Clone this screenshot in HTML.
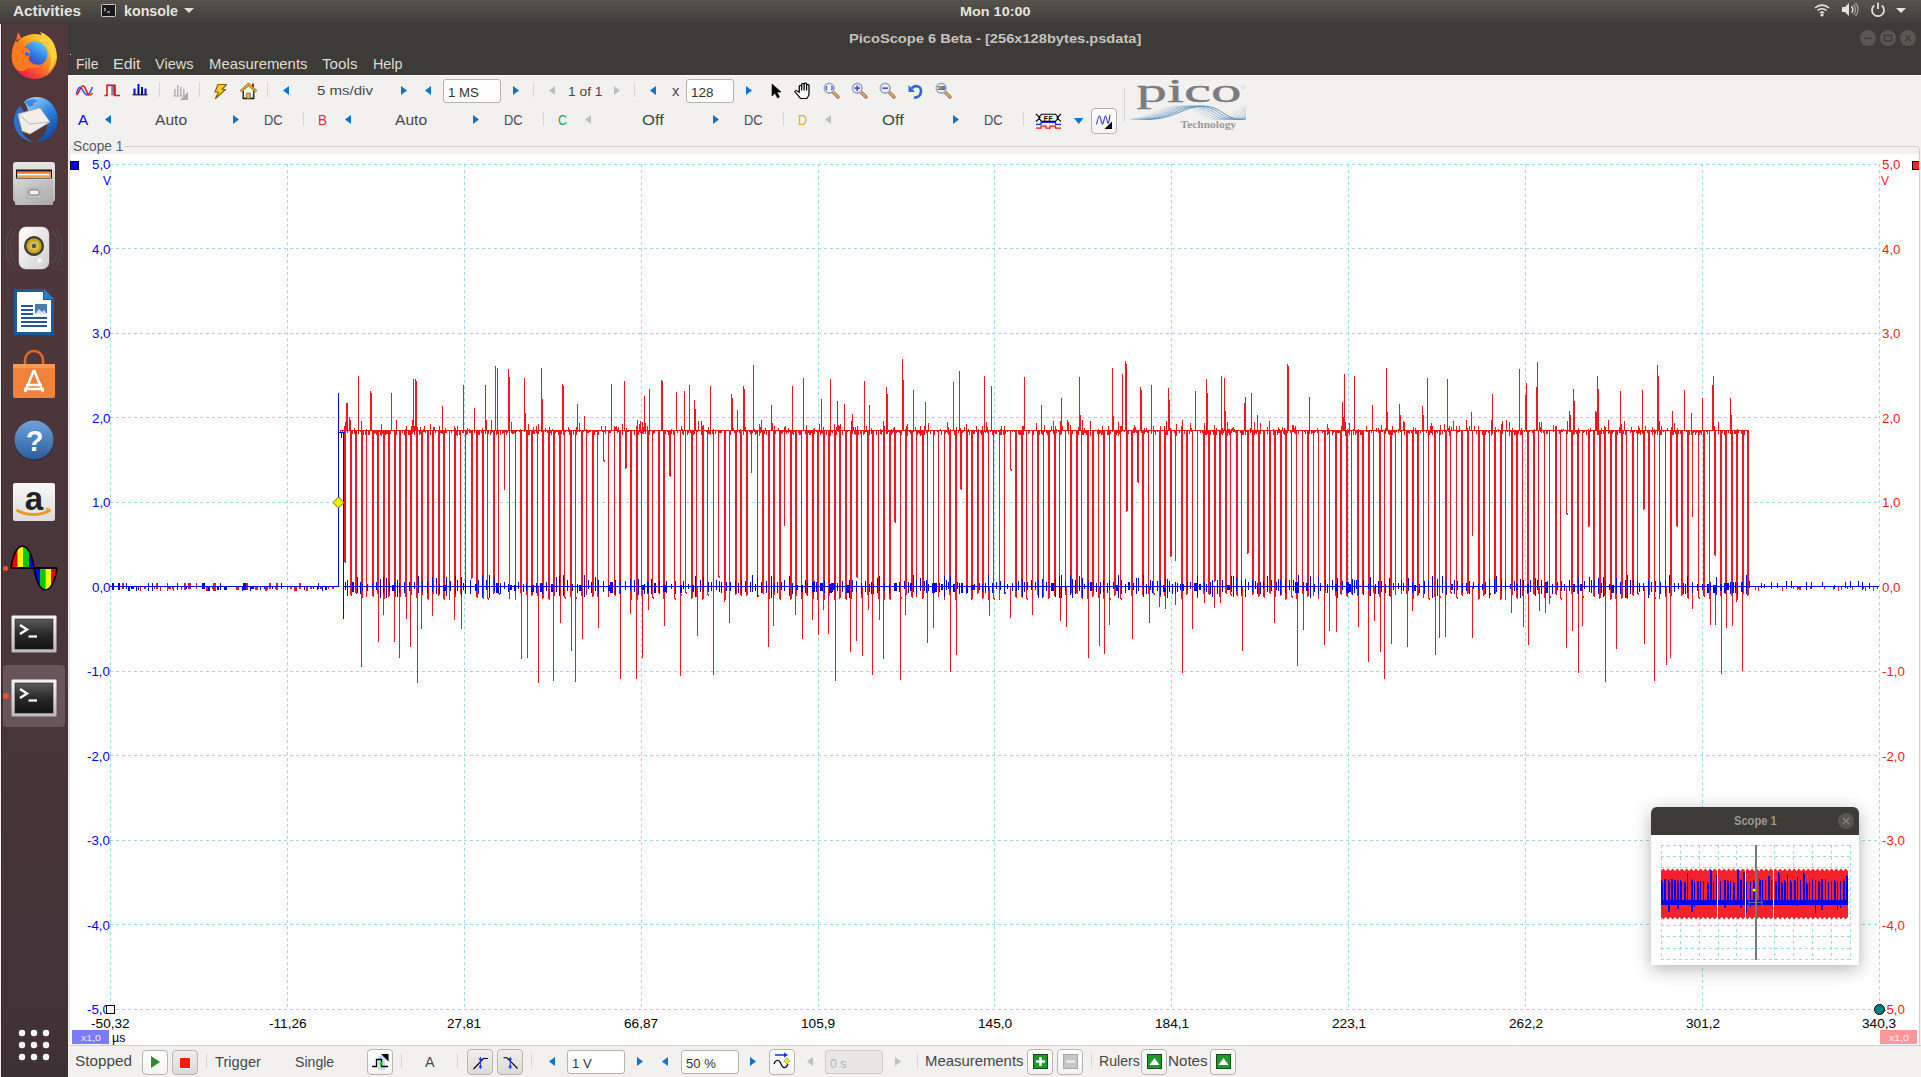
<!DOCTYPE html><html><head><meta charset="utf-8"><title>PicoScope</title><style>
*{margin:0;padding:0;box-sizing:border-box}
html,body{width:1921px;height:1077px;overflow:hidden;background:#3c3b37;font-family:"Liberation Sans",sans-serif}
.a{position:absolute}
.t{position:absolute;white-space:nowrap;transform-origin:0 0}
svg{position:absolute;overflow:visible}
</style></head><body>
<div class="a" style="left:0;top:0;width:1921px;height:24px;background:linear-gradient(#57534c,#3f3d39)"></div>
<div class="t" style="left:13.00px;top:2.97px;font-size:14.40px;line-height:16.09px;color:#e6e3dc;font-weight:bold;transform:scaleX(1.0621);">Activities</div>
<div class="t" style="left:124.00px;top:2.97px;font-size:14.40px;line-height:16.09px;color:#e6e3dc;font-weight:bold;transform:scaleX(0.9918);">konsole</div>
<div class="t" style="left:959.50px;top:3.63px;font-size:13.44px;line-height:15.02px;color:#e6e3dc;font-weight:bold;transform:scaleX(1.0725);">Mon 10:00</div>
<svg class="a" style="left:101px;top:4px;" width="15" height="13" viewBox="0 0 15 13"><rect x="0.5" y="0.5" width="14" height="12" rx="1" fill="#1a1a1a" stroke="#c8c8c8"/><path d="M3 4l2 1.5-2 1.5M6 8h3" stroke="#eee" stroke-width="1" fill="none"/></svg><svg class="a" style="left:184px;top:8px;" width="11" height="6" viewBox="0 0 11 6"><path d="M0 0h10l-5 5z" fill="#e0ddd6"/></svg><svg class="a" style="left:1814px;top:2px;" width="16" height="15" viewBox="0 0 16 15"><path d="M1 6a10 10 0 0 1 14 0M3.5 8.5a6.5 6.5 0 0 1 9 0M6 11a3 3 0 0 1 4 0" stroke="#e6e3dc" stroke-width="1.6" fill="none"/><circle cx="8" cy="13" r="1.6" fill="#e6e3dc"/></svg><svg class="a" style="left:1841px;top:2px;" width="17" height="15" viewBox="0 0 17 15"><path d="M1 5h3l4-4v13l-4-4H1z" fill="#e6e3dc"/><path d="M10.5 4.5a4 4 0 0 1 0 6M12.5 2.5a7 7 0 0 1 0 10M14.5 1a9.5 9.5 0 0 1 0 13" stroke="#a9a59d" stroke-width="1.2" fill="none"/><path d="M10.5 4.5a4 4 0 0 1 0 6" stroke="#e6e3dc" stroke-width="1.3" fill="none"/></svg><svg class="a" style="left:1870px;top:1px;" width="16" height="16" viewBox="0 0 16 16"><path d="M4.2 4.5a6 6 0 1 0 7.6 0" stroke="#e6e3dc" stroke-width="1.7" fill="none"/><path d="M8 1.5v6.5" stroke="#e6e3dc" stroke-width="1.7"/></svg><svg class="a" style="left:1896px;top:8px;" width="10" height="6" viewBox="0 0 10 6"><path d="M0 0h10l-5 5z" fill="#e6e3dc"/></svg>
<div class="a" style="left:68px;top:24px;width:1853px;height:51px;background:#3c3b37"></div>
<div class="t" style="left:848.50px;top:30.63px;font-size:13.44px;line-height:15.02px;color:#c6c2ba;font-weight:bold;transform:scaleX(1.0904);">PicoScope 6 Beta - [256x128bytes.psdata]</div>
<svg class="a" style="left:1860px;top:30px;" width="16" height="16" viewBox="0 0 16 16"><circle cx="8" cy="8" r="8" fill="#595751"/><path d="M4 8.3h8" stroke="#3a3934" stroke-width="1.2"/></svg><svg class="a" style="left:1880px;top:30px;" width="16" height="16" viewBox="0 0 16 16"><circle cx="8" cy="8" r="8" fill="#595751"/><rect x="4.3" y="5.4" width="7.4" height="5.4" fill="none" stroke="#3a3934" stroke-width="1.2"/></svg><svg class="a" style="left:1900px;top:30px;" width="16" height="16" viewBox="0 0 16 16"><circle cx="8" cy="8" r="8" fill="#595751"/><path d="M5.2 5.2l5.6 5.6M10.8 5.2l-5.6 5.6" stroke="#3a3934" stroke-width="1.1"/></svg><div class="a" style="left:70px;top:54px;width:1px;height:1px;background:#eee"></div>
<div class="t" style="left:75.60px;top:56.59px;font-size:13.72px;line-height:15.32px;color:#dfdbd2;transform:scaleX(1.0143);">File</div>
<div class="t" style="left:112.50px;top:56.59px;font-size:13.72px;line-height:15.32px;color:#dfdbd2;transform:scaleX(1.1622);">Edit</div>
<div class="t" style="left:154.50px;top:56.59px;font-size:13.72px;line-height:15.32px;color:#dfdbd2;transform:scaleX(1.0591);">Views</div>
<div class="t" style="left:208.50px;top:56.59px;font-size:13.72px;line-height:15.32px;color:#dfdbd2;transform:scaleX(1.0855);">Measurements</div>
<div class="t" style="left:322.00px;top:56.59px;font-size:13.72px;line-height:15.32px;color:#dfdbd2;transform:scaleX(1.1083);">Tools</div>
<div class="t" style="left:372.50px;top:56.59px;font-size:13.72px;line-height:15.32px;color:#dfdbd2;transform:scaleX(1.0465);">Help</div>
<div class="a" style="left:68px;top:75px;width:1853px;height:1002px;background:#f2f1f0;border-top:1px solid #fff"></div>
<svg class="a" style="left:76px;top:85px;" width="17" height="11" viewBox="0 0 17 11"><path d="M0.5 9C2 2 4 1 6 4s3 6 5 6 4-4 5.5-8" stroke="#3057ff" stroke-width="1.6" fill="none"/><path d="M0.5 10C3 9 4 1 7 1s4 9 6 9 3-1 3.5-2" stroke="#f01010" stroke-width="1.6" fill="none"/></svg><svg class="a" style="left:104px;top:84px;" width="17" height="13" viewBox="0 0 17 13"><defs><linearGradient id="pg" x1="0" y1="0" x2="1" y2="0"><stop offset="0" stop-color="#4ec8ff"/><stop offset="1" stop-color="#b02030"/></linearGradient></defs><rect x="7" y="2" width="4" height="9.5" fill="url(#pg)"/><path d="M0.5 11.5H3V1.2H11v10.3h5" stroke="#ff0000" stroke-width="1.5" fill="none"/></svg><svg class="a" style="left:132px;top:83px;" width="17" height="14" viewBox="0 0 17 14"><defs><linearGradient id="bg2" x1="0" y1="0" x2="0" y2="1"><stop offset="0" stop-color="#0010ff"/><stop offset="1" stop-color="#000080"/></linearGradient></defs><path d="M0.5 11.8h15" stroke="#000" stroke-width="1.1"/><rect x="1.5" y="5.5" width="2" height="6" fill="url(#bg2)"/><rect x="5.5" y="1" width="2" height="10.5" fill="url(#bg2)"/><rect x="9" y="4" width="2" height="7.5" fill="url(#bg2)"/><rect x="12.5" y="5.5" width="2" height="6" fill="url(#bg2)"/></svg><div class="a" style="left:159px;top:82px;width:1px;height:15px;background:#d8d6d3"></div><svg class="a" style="left:172px;top:84px;" width="17" height="16" viewBox="0 0 17 16"><path d="M1 12h11" stroke="#bbb" stroke-width="1.2"/><rect x="2" y="5" width="1.6" height="7" fill="#b5b5b5"/><rect x="5" y="1" width="1.6" height="11" fill="#b5b5b5"/><rect x="8" y="3" width="1.6" height="9" fill="#b5b5b5"/><rect x="11" y="5" width="1.6" height="7" fill="#b5b5b5"/><path d="M16 8v8H8z" fill="#aaa"/></svg><div class="a" style="left:199px;top:82px;width:1px;height:15px;background:#d8d6d3"></div><svg class="a" style="left:212px;top:83px;" width="16" height="17" viewBox="0 0 16 17"><path d="M6 1.5h8.5L10 6.5h3.5L3.5 15.5 6.5 9H3z" fill="#f8d030" stroke="#8a6000" stroke-width="1.2" stroke-linejoin="round"/></svg><svg class="a" style="left:240px;top:83px;" width="17" height="17" viewBox="0 0 17 17"><defs><linearGradient id="hw" x1="0" y1="0" x2="0" y2="1"><stop offset="0" stop-color="#ffffff"/><stop offset="1" stop-color="#b8e0e8"/></linearGradient></defs><rect x="12" y="0.5" width="1.8" height="4" fill="#a00"/><path d="M3.2 8v7.5h10.6V8" fill="url(#hw)" stroke="#1a1a1a" stroke-width="1.3"/><path d="M0.8 8.5L8.5 1.2 16.2 8.5" stroke="#7a5a00" stroke-width="2.6" fill="none"/><path d="M0.8 8.5L8.5 1.2 16.2 8.5" stroke="#f0c030" stroke-width="1.3" fill="none"/><rect x="6.8" y="10" width="3.4" height="5.5" fill="#e8b820" stroke="#6a5000" stroke-width="0.6"/></svg><div class="a" style="left:267px;top:82px;width:1px;height:15px;background:#d8d6d3"></div><svg class="a" style="left:283px;top:86px;" width="6" height="9" viewBox="0 0 6 9"><path d="M6 0V9L0 4.5z" fill="#1173c9"/></svg><div class="t" style="left:317.00px;top:83.81px;font-size:13.03px;line-height:14.56px;color:#474747;transform:scaleX(1.1536);">5 ms/div</div><svg class="a" style="left:401px;top:86px;" width="6" height="9" viewBox="0 0 6 9"><path d="M0 0V9L6 4.5z" fill="#1173c9"/></svg><svg class="a" style="left:425px;top:86px;" width="6" height="9" viewBox="0 0 6 9"><path d="M6 0V9L0 4.5z" fill="#1173c9"/></svg><div class="a" style="left:443px;top:79px;width:58px;height:24px;background:#fff;border:1px solid #b5b3ae;border-radius:3px"></div><div class="t" style="left:448.00px;top:84.73px;font-size:13.44px;line-height:15.02px;color:#303030;transform:scaleX(0.9796);">1 MS</div><svg class="a" style="left:512.5px;top:86px;" width="6" height="9" viewBox="0 0 6 9"><path d="M0 0V9L6 4.5z" fill="#1173c9"/></svg><div class="a" style="left:533px;top:82px;width:1px;height:15px;background:#d8d6d3"></div><svg class="a" style="left:549px;top:86px;" width="6" height="9" viewBox="0 0 6 9"><path d="M6 0V9L0 4.5z" fill="#bcc0c0"/></svg><div class="t" style="left:567.50px;top:83.83px;font-size:13.44px;line-height:15.02px;color:#474747;transform:scaleX(1.0266);">1 of 1</div><svg class="a" style="left:614px;top:86px;" width="6" height="9" viewBox="0 0 6 9"><path d="M0 0V9L6 4.5z" fill="#bcc0c0"/></svg><div class="a" style="left:634px;top:82px;width:1px;height:15px;background:#d8d6d3"></div><svg class="a" style="left:650px;top:86px;" width="6" height="9" viewBox="0 0 6 9"><path d="M6 0V9L0 4.5z" fill="#1173c9"/></svg><div class="t" style="left:672.00px;top:82.84px;font-size:14.54px;line-height:16.24px;color:#474747;transform:scaleX(1.0178);">x</div><div class="a" style="left:686px;top:79px;width:48px;height:24px;background:#fff;border:1px solid #b5b3ae;border-radius:3px"></div><div class="t" style="left:691.00px;top:84.73px;font-size:13.44px;line-height:15.02px;color:#303030;">128</div><svg class="a" style="left:745.6px;top:86px;" width="6" height="9" viewBox="0 0 6 9"><path d="M0 0V9L6 4.5z" fill="#1173c9"/></svg><svg class="a" style="left:771px;top:83px;" width="10" height="16" viewBox="0 0 10 16"><path d="M1 1v12l3-3 2.5 5 2-1-2.5-5H10z" fill="#000" stroke="#000" stroke-width="0.6"/></svg><svg class="a" style="left:794px;top:82px;" width="19" height="18" viewBox="0 0 19 18"><path transform="translate(-0.5,0) scale(1.28,1)" d="M5.5 16.5L3 12.5 1.2 10c-.6-.9.6-2 1.5-1.2L4.5 10.5V4.5c0-1.3 1.9-1.3 1.9 0V8V2.5c0-1.3 1.9-1.3 1.9 0V8V2c0-1.3 1.9-1.3 1.9 0v6V3.5c0-1.3 1.9-1.3 1.9 0V12c0 2-1 3.5-1.8 4.5z" fill="#fff" stroke="#000" stroke-width="1" stroke-linejoin="round"/></svg><svg class="a" style="left:823px;top:82px;" width="18" height="18" viewBox="0 0 18 18"><defs><linearGradient id="mh" x1="0" y1="0" x2="1" y2="1"><stop offset="0" stop-color="#f0a050"/><stop offset="1" stop-color="#8a7060"/></linearGradient></defs><path d="M9.8 9.8l5.2 5.2" stroke="#7a6a60" stroke-width="3.2" stroke-linecap="round"/><path d="M9.8 9.8l5 5" stroke="#f0a050" stroke-width="2" stroke-linecap="round"/><circle cx="6.2" cy="6.2" r="4.8" fill="#e6f4ff" stroke="#9aaacb" stroke-width="1.8"/><path d="M4 4.2a3 3 0 0 0 0 4M8.4 4.2a3 3 0 0 1 0 4" stroke="#7050b0" stroke-width="1.2" fill="none"/></svg><svg class="a" style="left:851px;top:82px;" width="18" height="18" viewBox="0 0 18 18"><defs><linearGradient id="mh" x1="0" y1="0" x2="1" y2="1"><stop offset="0" stop-color="#f0a050"/><stop offset="1" stop-color="#8a7060"/></linearGradient></defs><path d="M9.8 9.8l5.2 5.2" stroke="#7a6a60" stroke-width="3.2" stroke-linecap="round"/><path d="M9.8 9.8l5 5" stroke="#f0a050" stroke-width="2" stroke-linecap="round"/><circle cx="6.2" cy="6.2" r="4.8" fill="#e6f4ff" stroke="#9aaacb" stroke-width="1.8"/><path d="M3.5 6.2h5.4M6.2 3.5v5.4" stroke="#7040a0" stroke-width="1.7"/></svg><svg class="a" style="left:879px;top:82px;" width="18" height="18" viewBox="0 0 18 18"><defs><linearGradient id="mh" x1="0" y1="0" x2="1" y2="1"><stop offset="0" stop-color="#f0a050"/><stop offset="1" stop-color="#8a7060"/></linearGradient></defs><path d="M9.8 9.8l5.2 5.2" stroke="#7a6a60" stroke-width="3.2" stroke-linecap="round"/><path d="M9.8 9.8l5 5" stroke="#f0a050" stroke-width="2" stroke-linecap="round"/><circle cx="6.2" cy="6.2" r="4.8" fill="#e6f4ff" stroke="#9aaacb" stroke-width="1.8"/><path d="M3.5 6.2h5.4" stroke="#7040a0" stroke-width="1.7"/></svg><svg class="a" style="left:908px;top:83px;" width="15" height="16" viewBox="0 0 15 16"><path d="M4 5.5C6 2 13 2 13 8s-5 7-7 6" stroke="#2d6bd8" stroke-width="2.6" fill="none"/><path d="M0.5 2v7h6.5z" fill="#2d6bd8"/></svg><svg class="a" style="left:935px;top:82px;" width="18" height="18" viewBox="0 0 18 18"><defs><linearGradient id="mh" x1="0" y1="0" x2="1" y2="1"><stop offset="0" stop-color="#f0a050"/><stop offset="1" stop-color="#8a7060"/></linearGradient></defs><path d="M9.8 9.8l5.2 5.2" stroke="#7a6a60" stroke-width="3.2" stroke-linecap="round"/><path d="M9.8 9.8l5 5" stroke="#f0a050" stroke-width="2" stroke-linecap="round"/><circle cx="6.2" cy="6.2" r="4.8" fill="#e6f4ff" stroke="#9aaacb" stroke-width="1.8"/><text x="6.4" y="8.2" font-size="5.6" font-family="Liberation Sans" font-weight="bold" text-anchor="middle" fill="#000" textLength="7.4" lengthAdjust="spacingAndGlyphs">100</text></svg><div class="a" style="left:1124px;top:88px;width:1px;height:34px;background:#d8d6d3"></div><svg class="a" style="left:1130px;top:78px;" width="120" height="56" viewBox="0 0 120 56"><defs><clipPath id="wc"><rect x="1" y="20" width="115" height="30"/></clipPath></defs><text x="6.5" y="24" font-family="Liberation Serif" font-size="33" fill="#7c7c80" stroke="#7c7c80" stroke-width="0.35" textLength="105" lengthAdjust="spacingAndGlyphs">pico</text><circle cx="113" cy="9" r="1.6" fill="none" stroke="#bbb" stroke-width="0.5"/><g clip-path="url(#wc)"><path d="M-8.0 41.5C18.0 41.5 30.0 28 48.0 28S70.0 41.5 86.0 41.5S104.0 28 122.0 28" stroke="#d2e2ee" stroke-width="0.85" fill="none"/><path d="M-3.8 41.5C22.2 41.5 34.2 28 52.2 28S74.2 41.5 90.2 41.5S108.2 28 126.2 28" stroke="#bcd3e5" stroke-width="0.85" fill="none"/><path d="M0.40000000000000036 41.5C26.4 41.5 38.4 28 56.4 28S78.4 41.5 94.4 41.5S112.4 28 130.4 28" stroke="#a6c4dc" stroke-width="0.85" fill="none"/><path d="M4.600000000000001 41.5C30.6 41.5 42.6 28 60.6 28S82.6 41.5 98.6 41.5S116.6 28 134.6 28" stroke="#90b5d3" stroke-width="0.85" fill="none"/><path d="M8.8 41.5C34.8 41.5 46.8 28 64.8 28S86.8 41.5 102.8 41.5S120.8 28 138.8 28" stroke="#7aa6ca" stroke-width="0.85" fill="none"/><path d="M13.0 41.5C39.0 41.5 51.0 28 69.0 28S91.0 41.5 107.0 41.5S125.0 28 143.0 28" stroke="#6497c1" stroke-width="0.85" fill="none"/><path d="M17.200000000000003 41.5C43.2 41.5 55.2 28 73.2 28S95.2 41.5 111.2 41.5S129.2 28 147.2 28" stroke="#4e88b8" stroke-width="0.85" fill="none"/></g><text x="50.5" y="50.4" font-family="Liberation Serif" font-size="10.5" font-weight="bold" fill="#9a9a9a" textLength="55.6" lengthAdjust="spacingAndGlyphs">Technology</text></svg><div class="t" style="left:77.80px;top:113.29px;font-size:13.72px;line-height:15.32px;color:#0000ff;transform:scaleX(1.1098);">A</div><svg class="a" style="left:104.5px;top:115px;" width="6" height="9" viewBox="0 0 6 9"><path d="M6 0V9L0 4.5z" fill="#1173c9"/></svg><div class="t" style="left:155.00px;top:113.29px;font-size:13.72px;line-height:15.32px;color:#474747;transform:scaleX(1.1352);">Auto</div><svg class="a" style="left:232.5px;top:115px;" width="6" height="9" viewBox="0 0 6 9"><path d="M0 0V9L6 4.5z" fill="#1173c9"/></svg><div class="t" style="left:263.50px;top:113.29px;font-size:13.72px;line-height:15.32px;color:#474747;transform:scaleX(0.9333);">DC</div><div class="a" style="left:303px;top:112px;width:1px;height:14px;background:#d8d6d3"></div><div class="t" style="left:318.00px;top:113.29px;font-size:13.72px;line-height:15.32px;color:#ff2a3a;transform:scaleX(0.9866);">B</div><svg class="a" style="left:344.5px;top:115px;" width="6" height="9" viewBox="0 0 6 9"><path d="M6 0V9L0 4.5z" fill="#1173c9"/></svg><div class="t" style="left:395.00px;top:113.29px;font-size:13.72px;line-height:15.32px;color:#474747;transform:scaleX(1.1352);">Auto</div><svg class="a" style="left:472.5px;top:115px;" width="6" height="9" viewBox="0 0 6 9"><path d="M0 0V9L6 4.5z" fill="#1173c9"/></svg><div class="t" style="left:503.50px;top:113.29px;font-size:13.72px;line-height:15.32px;color:#474747;transform:scaleX(0.9333);">DC</div><div class="a" style="left:543px;top:112px;width:1px;height:14px;background:#d8d6d3"></div><div class="t" style="left:558.00px;top:113.29px;font-size:13.72px;line-height:15.32px;color:#1aaa50;transform:scaleX(0.9112);">C</div><svg class="a" style="left:584.5px;top:115px;" width="6" height="9" viewBox="0 0 6 9"><path d="M6 0V9L0 4.5z" fill="#bcc0c0"/></svg><div class="t" style="left:641.50px;top:113.29px;font-size:13.72px;line-height:15.32px;color:#474747;transform:scaleX(1.2150);">Off</div><svg class="a" style="left:712.5px;top:115px;" width="6" height="9" viewBox="0 0 6 9"><path d="M0 0V9L6 4.5z" fill="#1173c9"/></svg><div class="t" style="left:743.50px;top:113.29px;font-size:13.72px;line-height:15.32px;color:#474747;transform:scaleX(0.9333);">DC</div><div class="a" style="left:783px;top:112px;width:1px;height:14px;background:#d8d6d3"></div><div class="t" style="left:798.00px;top:113.29px;font-size:13.72px;line-height:15.32px;color:#e2a81c;transform:scaleX(0.9112);">D</div><svg class="a" style="left:824.5px;top:115px;" width="6" height="9" viewBox="0 0 6 9"><path d="M6 0V9L0 4.5z" fill="#bcc0c0"/></svg><div class="t" style="left:881.50px;top:113.29px;font-size:13.72px;line-height:15.32px;color:#474747;transform:scaleX(1.2150);">Off</div><svg class="a" style="left:952.5px;top:115px;" width="6" height="9" viewBox="0 0 6 9"><path d="M0 0V9L6 4.5z" fill="#1173c9"/></svg><div class="t" style="left:983.50px;top:113.29px;font-size:13.72px;line-height:15.32px;color:#474747;transform:scaleX(0.9333);">DC</div><div class="a" style="left:1023px;top:112px;width:1px;height:14px;background:#d8d6d3"></div><svg class="a" style="left:1035px;top:113px;" width="27" height="17" viewBox="0 0 27 17"><path d="M1 1l4 3.8L1 8.5M26 1l-4 3.8 4 3.8M3.5 4.8L6.5 1.2h14l3 3.6-3 3.6h-14z" stroke="#000" stroke-width="1.1" fill="none"/><text x="13.5" y="8" font-size="6.6" font-weight="bold" font-family="Liberation Sans" text-anchor="middle" fill="#000" letter-spacing="0.8">FF</text><path d="M1 11.3h5V9.5h14.5v1.8h5.5" stroke="#1030ff" stroke-width="1.2" fill="none"/><path d="M1 15.2h5v-2h5v2h4v-2h5.5v2h5.5" stroke="#ff1010" stroke-width="1.2" fill="none"/></svg><svg class="a" style="left:1074px;top:118px;" width="10" height="6" viewBox="0 0 10 6"><path d="M0 0h9.5L4.75 6z" fill="#1173c9"/></svg><div class="a" style="left:1091px;top:108px;width:26px;height:26px;background:linear-gradient(#ffffff,#f4f3f2);border:1px solid #b9b6b1;border-radius:4px"></div><svg class="a" style="left:1094px;top:111px;" width="20" height="20" viewBox="0 0 20 20"><path d="M2.5 13.5C3.5 9 4.5 5 5.5 5S7.5 13 8.5 13 10.5 5 11.5 5 13 11 14 12 15.5 6 16 4" stroke="#3a3ac8" stroke-width="1.1" fill="none"/><path d="M18 10.5v7.5H10.5z" fill="#000"/></svg>
<div class="a" style="left:0;top:24px;width:68px;height:1053px;background:linear-gradient(#51383b,#48363a 55%,#3f3236)"></div>
<div class="a" style="left:0;top:24px;width:1px;height:1053px;background:#f4f2ee"></div><div class="a" style="left:1px;top:24px;width:1px;height:1053px;background:#40292d"></div><svg class="a" style="left:10px;top:30px;" width="48" height="50" viewBox="0 0 48 50"><defs><linearGradient id="ffo" x1="0.9" y1="0.1" x2="0.2" y2="0.9"><stop offset="0" stop-color="#ffe44a"/><stop offset="0.35" stop-color="#ffa51f"/><stop offset="0.7" stop-color="#ff5a2a"/><stop offset="1" stop-color="#e8204f"/></linearGradient><linearGradient id="ffb" x1="0.8" y1="0" x2="0.2" y2="1"><stop offset="0" stop-color="#5fd0ff"/><stop offset="0.5" stop-color="#2f7de8"/><stop offset="1" stop-color="#4a2bb0"/></linearGradient></defs><circle cx="24.5" cy="26.5" r="22.5" fill="url(#ffo)"/><circle cx="25" cy="24" r="12.5" fill="url(#ffb)"/><path d="M6 10C8 14 9 16 13 17c4 1 6 2 7 4-3 0-5 1-5 3s3 2 5 1c-2 3-1 6 2 8s7 2 10 1c-3 3-8 5-14 4C10 46 3 38 2 30 1 22 3 15 6 10z" fill="#ff7a1f"/><path d="M16 21c3-1 5 1 4 3" fill="#ff9a1f"/><path d="M30 2c9 3 15 10 16 19s-3 17-8 21c3-6 4-12 2-18S34 12 30 10c2-3 2-5 0-8z" fill="#ffd23a"/><path d="M6 10l2-8 4 7z" fill="#ff6a2a"/></svg><svg class="a" style="left:10px;top:94px;" width="48" height="50" viewBox="0 0 48 50"><defs><linearGradient id="tbg" x1="0.2" y1="0" x2="0.8" y2="1"><stop offset="0" stop-color="#9ed4ff"/><stop offset="0.45" stop-color="#2f86e0"/><stop offset="1" stop-color="#0e3f9a"/></linearGradient></defs><path d="M14 8C20 2 32 1 40 8s10 20 5 29c-4 7-11 11-20 11 6-3 11-8 12-14s-2-12-8-14c-4-1-8 0-11 2 0-5 0-9-4-14z" fill="url(#tbg)"/><path d="M10 12C4 18 2 28 6 36s10 11 18 12c-6-2-12-7-14-14 0-8 4-12 6-14-2-2-4-5-6-8z" fill="#2a73d0"/><path d="M8 20l22-6 10 14-20 12-8-3z" fill="#f1eee6" stroke="#b8b4ab" stroke-width="0.7"/><path d="M8 20l12 10 20-2" stroke="#a8a49b" stroke-width="0.7" fill="none"/><path d="M14 8c4-3 10-4 14-1-3 1-6 3-8 6z" fill="#3a8ae6"/><circle cx="22" cy="11" r="0.9" fill="#e04020"/></svg><svg class="a" style="left:12px;top:161px;" width="44" height="46" viewBox="0 0 44 46"><defs><linearGradient id="fl" x1="0" y1="0" x2="0" y2="1"><stop offset="0" stop-color="#e6e6e6"/><stop offset="1" stop-color="#b5b5b5"/></linearGradient><linearGradient id="fd" x1="0" y1="0" x2="1" y2="1"><stop offset="0" stop-color="#d4d4d4"/><stop offset="1" stop-color="#a9a9a9"/></linearGradient></defs><rect x="1" y="1" width="42" height="40" rx="3" fill="url(#fl)"/><rect x="4" y="8.5" width="36" height="9" fill="#1a1410"/><rect x="5" y="11" width="34" height="6" fill="#f0a24a"/><rect x="6" y="13" width="31" height="1.3" fill="#fff"/><rect x="5" y="10" width="34" height="1.5" fill="#d2501a"/><rect x="3" y="19" width="38" height="25" rx="1" fill="url(#fd)"/><rect x="15" y="27" width="14" height="10" rx="2" fill="#c8c8c8" stroke="#9a9a9a" stroke-width="0.6"/><rect x="17" y="29" width="10" height="5" rx="1" fill="#f2f2f2" stroke="#555" stroke-width="0.8"/></svg><svg class="a" style="left:8px;top:222px;" width="52" height="50" viewBox="0 0 52 50"><defs><radialGradient id="sy" cx="0.5" cy="0.5" r="0.5"><stop offset="0" stop-color="#f5e07a"/><stop offset="1" stop-color="#b8920c"/></radialGradient><linearGradient id="sb" x1="0" y1="0" x2="1" y2="1"><stop offset="0" stop-color="#ffffff"/><stop offset="1" stop-color="#cfcfcf"/></linearGradient></defs><path d="M8 8C0 18 0 32 8 42M4 6C-4 18 -4 32 4 44M44 8c8 10 8 24 0 34M48 6c8 12 8 26 0 38" stroke="#5a6a90" stroke-width="1.1" fill="none" opacity="0.35"/><rect x="11" y="5" width="30" height="42" rx="7" fill="url(#sb)" stroke="#d8d8d8" stroke-width="0.5"/><circle cx="26" cy="24" r="10" fill="#3a3a3a"/><circle cx="26" cy="24" r="7.8" fill="url(#sy)"/><circle cx="26" cy="24" r="2.3" fill="#555"/><circle cx="31.5" cy="38.5" r="3.2" fill="#f4f4f4" stroke="#c4c4c4" stroke-width="0.6"/></svg><svg class="a" style="left:13px;top:288px;" width="42" height="48" viewBox="0 0 42 48"><path d="M1 1h30l10 10v36H1z" fill="#1f5a94"/><path d="M4 4h26v8h8v32H4z" fill="#fff"/><path d="M31 1l10 10h-10z" fill="#2f7ac2"/><path d="M8 18h12M8 22h12M8 26h12M8 30h26M8 34h26M8 38h26" stroke="#1f5a94" stroke-width="2"/><rect x="22" y="16" width="12" height="10" fill="#4a7ab0"/><path d="M22 26l4-5 3 3 2-2 3 4z" fill="#d0e0f0"/></svg><svg class="a" style="left:11px;top:352px;" width="46" height="48" viewBox="0 0 46 48"><path d="M14 12V8a9 9 0 0 1 18 0v4" stroke="#e06a2a" stroke-width="2.5" fill="none"/><rect x="2" y="12" width="42" height="34" rx="2" fill="#f0823a"/><rect x="2" y="12" width="42" height="4" fill="#f59a58"/><path d="M23 18l-9 22M23 18l9 22M15 33h16M13 37h20" stroke="#fff" stroke-width="2.5" fill="none"/></svg><svg class="a" style="left:11px;top:417px;" width="46" height="48" viewBox="0 0 46 48"><defs><linearGradient id="hg" x1="0" y1="0" x2="0" y2="1"><stop offset="0" stop-color="#6da3dc"/><stop offset="1" stop-color="#2b5d9c"/></linearGradient></defs><ellipse cx="23" cy="25" rx="20" ry="19" fill="#000" opacity="0.18"/><circle cx="23" cy="23" r="19.5" fill="url(#hg)"/><text x="23.5" y="34" text-anchor="middle" font-size="29" font-weight="bold" font-family="Liberation Sans" fill="#fff">?</text></svg><svg class="a" style="left:13px;top:483px;" width="42" height="38" viewBox="0 0 42 38"><defs><linearGradient id="ag" x1="0" y1="0" x2="0" y2="1"><stop offset="0" stop-color="#f8f8f8"/><stop offset="1" stop-color="#dcdcdc"/></linearGradient></defs><rect x="0" y="0" width="42" height="38" rx="2" fill="url(#ag)"/><text x="21" y="27" text-anchor="middle" font-size="33" font-weight="bold" font-family="Liberation Sans" fill="#222">a</text><path d="M3.5 27c9 6 25 6 34 0" stroke="#f39a1e" stroke-width="2.8" fill="none"/><path d="M33 24.5l5 2-3.5 4z" fill="#f39a1e"/></svg><svg class="a" style="left:8px;top:543px;" width="54" height="50" viewBox="0 0 54 50"><defs><clipPath id="ph1"><path d="M3 25C7 -4 22 -4 26 25z"/></clipPath><clipPath id="ph2"><path d="M26 25C30 54 45 54 49 25z"/></clipPath></defs><g clip-path="url(#ph1)"><rect x="0" y="0" width="9.5" height="26" fill="#e00"/><rect x="9.5" y="0" width="5.5" height="26" fill="#ff0"/><rect x="15" y="0" width="6" height="26" fill="#0c0"/><rect x="21" y="0" width="6" height="26" fill="#00e"/></g><g clip-path="url(#ph2)"><rect x="26" y="24" width="6" height="26" fill="#00e"/><rect x="32" y="24" width="5.5" height="26" fill="#0c0"/><rect x="37.5" y="24" width="5.5" height="26" fill="#ff0"/><rect x="43" y="24" width="7" height="26" fill="#e00"/></g><path d="M3 25C7 -4 22 -4 26 25S45 54 49 25" stroke="#000" stroke-width="1.6" fill="none"/><path d="M3 25h46" stroke="#000" stroke-width="1.8"/></svg><div class="a" style="left:3px;top:566px;width:5px;height:5px;border-radius:50%;background:#e9542a"></div><svg class="a" style="left:11px;top:615px;" width="46" height="38" viewBox="0 0 46 38"><defs><linearGradient id="tf1" x1="0" y1="0" x2="0" y2="1"><stop offset="0" stop-color="#f4f4f4"/><stop offset="1" stop-color="#b9b9b9"/></linearGradient><linearGradient id="ti1" x1="0" y1="0" x2="0" y2="1"><stop offset="0" stop-color="#5a5a5a"/><stop offset="0.5" stop-color="#2a2a2a"/><stop offset="1" stop-color="#111"/></linearGradient></defs><rect x="0.5" y="0.5" width="45" height="37" rx="1" fill="url(#tf1)"/><rect x="4" y="4" width="38" height="30" fill="url(#ti1)" stroke="#222" stroke-width="0.6"/><path d="M9 10l7 4.5-7 4.5" stroke="#fff" stroke-width="2.4" fill="none"/><path d="M17.5 21.5h8.5" stroke="#fff" stroke-width="2.2"/></svg><div class="a" style="left:3px;top:665px;width:62px;height:62px;border-radius:4px;background:#675559"></div><svg class="a" style="left:11px;top:679px;" width="46" height="38" viewBox="0 0 46 38"><defs><linearGradient id="tf2" x1="0" y1="0" x2="0" y2="1"><stop offset="0" stop-color="#f4f4f4"/><stop offset="1" stop-color="#b9b9b9"/></linearGradient><linearGradient id="ti2" x1="0" y1="0" x2="0" y2="1"><stop offset="0" stop-color="#5a5a5a"/><stop offset="0.5" stop-color="#2a2a2a"/><stop offset="1" stop-color="#111"/></linearGradient></defs><rect x="0.5" y="0.5" width="45" height="37" rx="1" fill="url(#tf2)"/><rect x="4" y="4" width="38" height="30" fill="url(#ti2)" stroke="#222" stroke-width="0.6"/><path d="M9 10l7 4.5-7 4.5" stroke="#fff" stroke-width="2.4" fill="none"/><path d="M17.5 21.5h8.5" stroke="#fff" stroke-width="2.2"/></svg><div class="a" style="left:3px;top:693px;width:6px;height:6px;border-radius:50%;background:#e9542a"></div><svg class="a" style="left:18px;top:1029px;" width="32" height="32" viewBox="0 0 32 32"><circle cx="4" cy="4" r="3.2" fill="#fff"/><circle cx="16" cy="4" r="3.2" fill="#fff"/><circle cx="28" cy="4" r="3.2" fill="#fff"/><circle cx="4" cy="16" r="3.2" fill="#fff"/><circle cx="16" cy="16" r="3.2" fill="#fff"/><circle cx="28" cy="16" r="3.2" fill="#fff"/><circle cx="4" cy="28" r="3.2" fill="#fff"/><circle cx="16" cy="28" r="3.2" fill="#fff"/><circle cx="28" cy="28" r="3.2" fill="#fff"/></svg>
<div class="a" style="left:69px;top:146px;width:1851px;height:900px;border:1px solid #d3d1ce;border-left-color:#e6e4e1;border-radius:4px 4px 0 0;background:#f2f1f0"></div>
<div class="a" style="left:70px;top:154px;width:1849px;height:891px;background:#fff"></div>
<div class="a" style="left:74px;top:139px;width:51px;height:12px;background:#f2f1f0"></div>
<div class="t" style="left:73.00px;top:139.49px;font-size:13.72px;line-height:15.32px;color:#5a5a5a;">Scope 1</div>
<svg class="a" style="left:0;top:0" width="1921" height="1077"><path d="M110.5 164V1010M287.5 164V1010M464.5 164V1010M641.5 164V1010M818.5 164V1010M994.5 164V1010M1171.5 164V1010M1348.5 164V1010M1525.5 164V1010M1702.5 164V1010M1879.5 164V1010M110 164.5H1880M110 248.5H1880M110 333.5H1880M110 417.5H1880M110 502.5H1880M110 586.5H1880M110 671.5H1880M110 755.5H1880M110 840.5H1880M110 924.5H1880M110 1009.5H1880" stroke="#a6d5e6" stroke-width="1" stroke-dasharray="3 3" fill="none"/></svg><div class="t" style="left:91.50px;top:159.13px;font-size:12.35px;line-height:13.79px;color:#0000ff;transform:scaleX(1.0781);">5,0</div><div class="t" style="left:1881.70px;top:159.13px;font-size:12.35px;line-height:13.79px;color:#ff1a1a;transform:scaleX(1.0781);">5,0</div><div class="t" style="left:91.50px;top:243.63px;font-size:12.35px;line-height:13.79px;color:#0000ff;transform:scaleX(1.0781);">4,0</div><div class="t" style="left:1881.70px;top:243.63px;font-size:12.35px;line-height:13.79px;color:#ff1a1a;transform:scaleX(1.0781);">4,0</div><div class="t" style="left:91.50px;top:328.13px;font-size:12.35px;line-height:13.79px;color:#0000ff;transform:scaleX(1.0781);">3,0</div><div class="t" style="left:1881.70px;top:328.13px;font-size:12.35px;line-height:13.79px;color:#ff1a1a;transform:scaleX(1.0781);">3,0</div><div class="t" style="left:91.50px;top:412.63px;font-size:12.35px;line-height:13.79px;color:#0000ff;transform:scaleX(1.0781);">2,0</div><div class="t" style="left:1881.70px;top:412.63px;font-size:12.35px;line-height:13.79px;color:#ff1a1a;transform:scaleX(1.0781);">2,0</div><div class="t" style="left:91.50px;top:497.13px;font-size:12.35px;line-height:13.79px;color:#0000ff;transform:scaleX(1.0781);">1,0</div><div class="t" style="left:1881.70px;top:497.13px;font-size:12.35px;line-height:13.79px;color:#ff1a1a;transform:scaleX(1.0781);">1,0</div><div class="t" style="left:91.50px;top:581.63px;font-size:12.35px;line-height:13.79px;color:#0000ff;transform:scaleX(1.0781);">0,0</div><div class="t" style="left:1881.70px;top:581.63px;font-size:12.35px;line-height:13.79px;color:#ff1a1a;transform:scaleX(1.0781);">0,0</div><div class="t" style="left:87.04px;top:666.13px;font-size:12.35px;line-height:13.79px;color:#0000ff;transform:scaleX(1.0781);">-1,0</div><div class="t" style="left:1881.70px;top:666.13px;font-size:12.35px;line-height:13.79px;color:#ff1a1a;transform:scaleX(1.0781);">-1,0</div><div class="t" style="left:87.04px;top:750.63px;font-size:12.35px;line-height:13.79px;color:#0000ff;transform:scaleX(1.0781);">-2,0</div><div class="t" style="left:1881.70px;top:750.63px;font-size:12.35px;line-height:13.79px;color:#ff1a1a;transform:scaleX(1.0781);">-2,0</div><div class="t" style="left:87.04px;top:835.13px;font-size:12.35px;line-height:13.79px;color:#0000ff;transform:scaleX(1.0781);">-3,0</div><div class="t" style="left:1881.70px;top:835.13px;font-size:12.35px;line-height:13.79px;color:#ff1a1a;transform:scaleX(1.0781);">-3,0</div><div class="t" style="left:87.04px;top:919.63px;font-size:12.35px;line-height:13.79px;color:#0000ff;transform:scaleX(1.0781);">-4,0</div><div class="t" style="left:1881.70px;top:919.63px;font-size:12.35px;line-height:13.79px;color:#ff1a1a;transform:scaleX(1.0781);">-4,0</div><div class="t" style="left:87.04px;top:1004.13px;font-size:12.35px;line-height:13.79px;color:#0000ff;transform:scaleX(1.0781);">-5,0</div><div class="t" style="left:1881.70px;top:1004.13px;font-size:12.35px;line-height:13.79px;color:#ff1a1a;transform:scaleX(1.0781);">-5,0</div><div class="t" style="left:103.00px;top:174.83px;font-size:12.35px;line-height:13.79px;color:#0000ff;transform:scaleX(0.9744);">V</div><div class="t" style="left:1881.00px;top:174.83px;font-size:12.35px;line-height:13.79px;color:#ff1a1a;transform:scaleX(0.9744);">V</div><div class="t" style="left:91.15px;top:1017.83px;font-size:12.35px;line-height:13.79px;color:#000;transform:scaleX(1.1057);">-50,32</div><div class="t" style="left:268.56px;top:1017.83px;font-size:12.35px;line-height:13.79px;color:#000;transform:scaleX(1.1057);">-11,26</div><div class="t" style="left:447.20px;top:1017.83px;font-size:12.35px;line-height:13.79px;color:#000;transform:scaleX(1.1057);">27,81</div><div class="t" style="left:624.10px;top:1017.83px;font-size:12.35px;line-height:13.79px;color:#000;transform:scaleX(1.1057);">66,87</div><div class="t" style="left:801.00px;top:1017.83px;font-size:12.35px;line-height:13.79px;color:#000;transform:scaleX(1.1057);">105,9</div><div class="t" style="left:977.90px;top:1017.83px;font-size:12.35px;line-height:13.79px;color:#000;transform:scaleX(1.1057);">145,0</div><div class="t" style="left:1154.80px;top:1017.83px;font-size:12.35px;line-height:13.79px;color:#000;transform:scaleX(1.1057);">184,1</div><div class="t" style="left:1331.70px;top:1017.83px;font-size:12.35px;line-height:13.79px;color:#000;transform:scaleX(1.1057);">223,1</div><div class="t" style="left:1508.60px;top:1017.83px;font-size:12.35px;line-height:13.79px;color:#000;transform:scaleX(1.1057);">262,2</div><div class="t" style="left:1685.50px;top:1017.83px;font-size:12.35px;line-height:13.79px;color:#000;transform:scaleX(1.1057);">301,2</div><div class="t" style="left:1862.40px;top:1017.83px;font-size:12.35px;line-height:13.79px;color:#000;transform:scaleX(1.1057);">340,3</div>
<svg class="a" style="left:0;top:0" width="1921" height="1077" viewBox="0 0 1921 1077"><path d="M122.5 583V589M123.5 583V589M140.5 586V591M144.5 586V589M145.5 586V589M154.5 586V589M156.5 583V589M157.5 583V589M160.5 586V591M167.5 583V591M168.5 586V589M169.5 586V589M170.5 586V589M172.5 586V589M173.5 586V591M181.5 586V590M184.5 583V590M185.5 583V590M188.5 583V589M189.5 583V589M190.5 583V589M196.5 583V589M206.5 586V591M207.5 586V591M212.5 586V589M213.5 583V591M214.5 583V591M215.5 583V591M236.5 586V590M237.5 586V590M238.5 586V590M246.5 583V590M247.5 583V590M255.5 586V590M256.5 586V590M257.5 586V590M265.5 586V591M266.5 586V591M267.5 586V590M269.5 583V589M270.5 583V589M275.5 586V589M276.5 583V590M277.5 583V590M287.5 586V590M290.5 586V589M291.5 586V589M294.5 586V591M295.5 586V591M296.5 586V591M299.5 583V589M300.5 583V589M306.5 586V591M307.5 586V591M310.5 586V589M311.5 586V589M320.5 586V589M321.5 586V589M328.5 586V589M332.5 586V589M333.5 586V589M338.5 430V587M340.5 430V432M341.5 430V431M342.5 430V433M343.5 430V431M344.5 426V431M345.5 422V434M346.5 430V431M347.5 430V433M348.5 430V431M349.5 430V431M350.5 430V431M351.5 430V431M352.5 430V434M353.5 430V431M354.5 428V434M355.5 430V433M356.5 430V431M357.5 430V431M358.5 430V434M359.5 430V431M360.5 430V432M361.5 421V431M362.5 430V434M363.5 430V435M364.5 430V431M365.5 430V435M366.5 429V433M367.5 430V431M368.5 430V435M369.5 430V435M370.5 430V431M371.5 430V431M372.5 430V434M373.5 430V431M374.5 430V434M375.5 430V433M376.5 430V435M377.5 430V431M378.5 430V432M379.5 430V432M380.5 430V435M381.5 424V436M382.5 430V434M383.5 430V434M384.5 430V432M385.5 430V435M386.5 430V434M387.5 430V434M388.5 430V431M389.5 430V431M390.5 430V434M391.5 430V431M392.5 430V431M393.5 430V431M394.5 430V434M395.5 430V431M396.5 420V435M397.5 430V431M398.5 430V431M399.5 430V434M400.5 430V431M401.5 430V431M402.5 430V433M403.5 430V431M404.5 430V435M405.5 429V433M406.5 426V433M407.5 430V431M408.5 430V435M409.5 430V435M410.5 430V431M411.5 426V434M412.5 420V434M413.5 430V432M414.5 426V435M415.5 427V431M416.5 430V431M417.5 427V431M418.5 430V431M419.5 430V435M420.5 427V434M421.5 430V435M422.5 430V434M423.5 429V432M424.5 426V432M425.5 430V433M426.5 430V431M427.5 430V431M428.5 430V431M429.5 430V431M430.5 424V435M431.5 430V431M432.5 430V431M433.5 427V433M434.5 427V431M435.5 430V433M436.5 430V431M437.5 430V431M438.5 430V431M439.5 426V434M440.5 430V433M441.5 430V433M442.5 430V434M443.5 430V431M444.5 430V431M445.5 428V433M446.5 430V433M447.5 430V431M448.5 430V431M449.5 430V435M450.5 430V431M451.5 430V433M452.5 430V431M453.5 430V431M454.5 426V432M455.5 428V432M456.5 430V435M457.5 426V436M458.5 430V431M459.5 430V435M460.5 430V433M461.5 430V431M462.5 430V433M463.5 430V433M464.5 430V431M465.5 430V433M466.5 430V435M467.5 428V434M468.5 430V431M469.5 429V433M470.5 430V433M471.5 430V431M472.5 430V434M473.5 430V431M474.5 430V433M475.5 430V431M476.5 430V431M477.5 430V435M478.5 430V435M479.5 430V435M480.5 430V431M481.5 430V433M482.5 428V435M483.5 430V435M484.5 430V431M485.5 430V434M486.5 430V431M487.5 430V433M488.5 430V434M489.5 430V431M490.5 430V435M491.5 420V433M492.5 430V432M493.5 430V434M494.5 430V431M495.5 430V431M496.5 430V435M497.5 423V434M498.5 430V432M499.5 430V431M500.5 430V435M501.5 430V431M502.5 430V434M503.5 430V433M504.5 430V431M505.5 430V432M506.5 430V435M507.5 430V433M508.5 430V431M509.5 430V431M510.5 430V431M511.5 422V433M512.5 430V434M513.5 430V434M514.5 430V433M515.5 430V435M516.5 430V432M517.5 430V431M518.5 430V431M519.5 430V432M520.5 429V435M521.5 430V431M522.5 430V431M523.5 430V431M524.5 430V432M525.5 430V431M526.5 430V431M527.5 430V431M528.5 424V435M529.5 430V435M530.5 430V431M531.5 430V431M532.5 430V431M533.5 427V434M534.5 430V434M535.5 430V431M536.5 426V433M537.5 430V431M538.5 424V434M539.5 430V431M540.5 430V431M541.5 429V432M542.5 430V433M543.5 430V433M544.5 430V431M545.5 428V432M546.5 430V431M547.5 430V433M548.5 430V431M549.5 427V431M550.5 430V433M551.5 430V435M552.5 429V431M553.5 430V431M554.5 430V435M555.5 430V433M556.5 430V432M557.5 430V432M558.5 430V435M559.5 430V431M560.5 430V433M561.5 430V434M562.5 430V431M563.5 430V435M564.5 430V434M565.5 430V432M566.5 430V431M567.5 430V431M568.5 427V432M569.5 429V435M570.5 430V434M571.5 430V433M572.5 430V431M573.5 430V435M574.5 430V431M575.5 430V431M576.5 427V435M577.5 426V432M578.5 430V431M579.5 423V432M580.5 430V431M581.5 430V431M582.5 430V431M583.5 430V432M584.5 430V431M585.5 430V431M586.5 429V432M587.5 430V433M588.5 430V433M589.5 430V432M590.5 430V432M591.5 430V431M592.5 430V431M593.5 430V434M594.5 430V435M595.5 430V432M596.5 430V432M597.5 430V433M598.5 430V435M599.5 430V431M600.5 430V431M601.5 426V431M602.5 430V432M603.5 430V435M604.5 430V432M605.5 426V434M606.5 430V431M607.5 430V431M608.5 430V431M609.5 430V433M610.5 430V433M611.5 430V431M612.5 430V431M613.5 430V431M614.5 426V431M615.5 427V431M616.5 426V431M617.5 429V433M618.5 427V432M619.5 430V431M620.5 430V433M621.5 430V431M622.5 424V435M623.5 430V431M624.5 430V431M625.5 430V433M626.5 428V434M627.5 430V432M628.5 430V432M629.5 430V431M630.5 430V432M631.5 430V435M632.5 430V431M633.5 430V431M634.5 430V435M635.5 430V431M636.5 426V431M637.5 420V433M638.5 430V435M639.5 424V432M640.5 421V433M641.5 430V431M642.5 422V434M643.5 427V434M644.5 430V432M645.5 423V434M646.5 430V431M647.5 426V434M648.5 430V431M649.5 430V435M650.5 430V431M651.5 430V431M652.5 430V431M653.5 430V434M654.5 430V433M655.5 430V431M656.5 430V431M657.5 430V431M658.5 430V434M659.5 430V433M660.5 430V431M661.5 429V431M662.5 430V431M663.5 430V431M664.5 430V433M665.5 430V434M666.5 430V431M667.5 430V432M668.5 430V435M669.5 430V434M670.5 430V431M671.5 429V434M672.5 430V431M673.5 430V435M674.5 430V435M675.5 430V431M676.5 430V431M677.5 430V433M678.5 430V431M679.5 430V431M680.5 430V431M681.5 426V431M682.5 429V434M683.5 430V435M684.5 430V431M685.5 430V431M686.5 430V431M687.5 430V435M688.5 430V433M689.5 430V431M690.5 430V433M691.5 430V434M692.5 430V434M693.5 430V435M694.5 430V434M695.5 430V431M696.5 430V431M697.5 430V432M698.5 421V431M699.5 430V431M700.5 430V431M701.5 421V435M702.5 426V433M703.5 425V431M704.5 430V431M705.5 430V431M706.5 430V432M707.5 430V431M708.5 427V434M709.5 430V434M710.5 421V435M711.5 430V431M712.5 430V434M713.5 429V434M714.5 430V431M715.5 430V434M716.5 430V431M717.5 430V431M718.5 430V431M719.5 430V433M720.5 430V433M721.5 430V433M722.5 430V431M723.5 430V431M724.5 430V432M725.5 430V432M726.5 430V431M727.5 430V431M728.5 430V431M729.5 430V431M730.5 430V435M731.5 430V431M732.5 430V431M733.5 428V431M734.5 430V433M735.5 430V431M736.5 430V434M737.5 428V432M738.5 430V431M739.5 430V433M740.5 429V431M741.5 430V432M742.5 430V431M743.5 430V435M744.5 426V431M745.5 427V432M746.5 430V435M747.5 430V432M748.5 430V431M749.5 430V432M750.5 430V434M751.5 430V434M752.5 430V433M753.5 430V431M754.5 429V432M755.5 430V435M756.5 430V434M757.5 430V432M758.5 430V431M759.5 424V436M760.5 427V433M761.5 430V432M762.5 430V431M763.5 430V431M764.5 430V434M765.5 428V431M766.5 430V435M767.5 430V431M768.5 430V431M769.5 430V431M770.5 430V431M771.5 423V431M772.5 430V431M773.5 430V431M774.5 426V435M775.5 430V434M776.5 430V431M777.5 430V431M778.5 428V431M779.5 430V432M780.5 430V435M781.5 430V434M782.5 430V433M783.5 430V432M784.5 427V434M785.5 426V432M786.5 430V434M787.5 430V432M788.5 428V433M789.5 430V432M790.5 430V435M791.5 430V433M792.5 420V434M793.5 430V435M794.5 430V432M795.5 430V431M796.5 430V431M797.5 430V431M798.5 430V433M799.5 430V435M800.5 430V435M801.5 430V432M802.5 430V431M803.5 430V431M804.5 430V431M805.5 430V434M806.5 425V432M807.5 430V434M808.5 430V433M809.5 430V435M810.5 430V435M811.5 430V433M812.5 430V433M813.5 429V435M814.5 428V434M815.5 430V431M816.5 430V432M817.5 430V434M818.5 430V431M819.5 424V432M820.5 430V435M821.5 430V433M822.5 430V434M823.5 427V435M824.5 430V432M825.5 430V431M826.5 430V435M827.5 430V431M828.5 430V434M829.5 430V432M830.5 421V436M831.5 430V432M832.5 430V433M833.5 430V431M834.5 424V433M835.5 430V431M836.5 427V435M837.5 430V431M838.5 425V432M839.5 426V431M840.5 424V433M841.5 430V431M842.5 430V435M843.5 430V431M844.5 430V431M845.5 430V431M846.5 430V433M847.5 430V432M848.5 430V431M849.5 430V431M850.5 430V431M851.5 421V431M852.5 430V434M853.5 430V431M854.5 430V434M855.5 427V435M856.5 430V432M857.5 426V434M858.5 430V435M859.5 430V431M860.5 430V434M861.5 430V431M862.5 430V431M863.5 430V435M864.5 420V434M865.5 430V432M866.5 426V432M867.5 430V431M868.5 430V432M869.5 430V435M870.5 430V431M871.5 428V434M872.5 430V431M873.5 430V434M874.5 430V431M875.5 430V431M876.5 430V435M877.5 430V431M878.5 430V432M879.5 430V431M880.5 429V434M881.5 430V435M882.5 430V432M883.5 421V435M884.5 426V431M885.5 430V431M886.5 428V434M887.5 430V434M888.5 430V432M889.5 430V433M890.5 430V435M891.5 429V435M892.5 430V433M893.5 428V432M894.5 427V434M895.5 430V431M896.5 430V433M897.5 430V432M898.5 430V432M899.5 430V433M900.5 430V432M901.5 430V435M902.5 430V431M903.5 430V431M904.5 430V431M905.5 429V432M906.5 426V433M907.5 424V436M908.5 430V431M909.5 430V432M910.5 430V434M911.5 430V431M912.5 430V433M913.5 430V432M914.5 430V431M915.5 427V431M916.5 430V433M917.5 430V435M918.5 430V433M919.5 430V434M920.5 426V436M921.5 430V435M922.5 430V433M923.5 430V435M924.5 426V435M925.5 430V431M926.5 430V433M927.5 430V431M928.5 423V432M929.5 430V431M930.5 430V434M931.5 430V431M932.5 430V431M933.5 430V432M934.5 430V435M935.5 430V431M936.5 430V431M937.5 430V432M938.5 430V433M939.5 430V431M940.5 429V431M941.5 430V435M942.5 430V431M943.5 430V431M944.5 430V433M945.5 430V434M946.5 430V432M947.5 422V433M948.5 427V435M949.5 430V434M950.5 429V434M951.5 430V431M952.5 430V431M953.5 430V431M954.5 430V435M955.5 430V431M956.5 427V431M957.5 430V431M958.5 430V433M959.5 430V431M960.5 428V432M961.5 430V435M962.5 430V433M963.5 430V432M964.5 427V431M965.5 430V431M966.5 424V436M967.5 430V434M968.5 429V432M969.5 430V435M970.5 430V431M971.5 430V431M972.5 430V431M973.5 430V434M974.5 430V434M975.5 430V431M976.5 426V432M977.5 430V433M978.5 429V434M979.5 430V431M980.5 430V433M981.5 430V435M982.5 426V434M983.5 430V433M984.5 430V432M985.5 430V433M986.5 422V432M987.5 427V433M988.5 430V431M989.5 430V431M990.5 430V432M991.5 430V431M992.5 430V435M993.5 430V432M994.5 430V433M995.5 430V434M996.5 430V434M997.5 430V431M998.5 430V432M999.5 430V431M1000.5 429V435M1001.5 426V435M1002.5 430V431M1003.5 430V435M1004.5 426V435M1005.5 430V434M1006.5 430V431M1007.5 430V432M1008.5 430V431M1009.5 430V431M1010.5 430V434M1011.5 430V431M1012.5 430V432M1013.5 430V431M1014.5 430V432M1015.5 430V434M1016.5 430V433M1017.5 430V431M1018.5 430V434M1019.5 430V435M1020.5 430V435M1021.5 430V432M1022.5 426V434M1023.5 426V435M1024.5 430V431M1025.5 430V431M1026.5 430V431M1027.5 430V431M1028.5 430V434M1029.5 430V433M1030.5 430V431M1031.5 430V431M1032.5 430V432M1033.5 430V435M1034.5 430V431M1035.5 430V431M1036.5 423V431M1037.5 430V431M1038.5 430V432M1039.5 430V435M1040.5 430V431M1041.5 427V434M1042.5 430V435M1043.5 430V431M1044.5 425V432M1045.5 430V431M1046.5 430V433M1047.5 430V435M1048.5 430V431M1049.5 430V431M1050.5 430V432M1051.5 426V431M1052.5 430V431M1053.5 421V434M1054.5 430V433M1055.5 426V435M1056.5 429V433M1057.5 430V431M1058.5 430V432M1059.5 430V432M1060.5 421V435M1061.5 430V434M1062.5 426V431M1063.5 430V431M1064.5 430V431M1065.5 430V431M1066.5 430V431M1067.5 420V431M1068.5 422V434M1069.5 430V431M1070.5 425V434M1071.5 430V433M1072.5 430V434M1073.5 430V431M1074.5 430V431M1075.5 430V431M1076.5 430V433M1077.5 430V433M1078.5 427V435M1079.5 430V431M1080.5 430V431M1081.5 430V434M1082.5 420V435M1083.5 430V435M1084.5 428V433M1085.5 430V433M1086.5 430V435M1087.5 430V433M1088.5 430V432M1089.5 430V431M1090.5 421V436M1091.5 430V431M1092.5 430V431M1093.5 430V431M1094.5 430V431M1095.5 430V431M1096.5 430V431M1097.5 430V434M1098.5 429V432M1099.5 430V434M1100.5 430V433M1101.5 430V435M1102.5 426V435M1103.5 430V431M1104.5 430V433M1105.5 430V431M1106.5 430V431M1107.5 430V435M1108.5 426V435M1109.5 430V434M1110.5 430V434M1111.5 430V431M1112.5 428V432M1113.5 430V431M1114.5 430V431M1115.5 430V434M1116.5 430V435M1117.5 430V433M1118.5 422V436M1119.5 430V434M1120.5 426V432M1121.5 426V432M1122.5 420V431M1123.5 430V431M1124.5 430V432M1125.5 430V431M1126.5 430V431M1127.5 430V435M1128.5 430V434M1129.5 430V431M1130.5 430V431M1131.5 430V431M1132.5 430V431M1133.5 428V433M1134.5 425V433M1135.5 427V432M1136.5 430V433M1137.5 430V435M1138.5 430V431M1139.5 430V431M1140.5 430V431M1141.5 428V433M1142.5 430V435M1143.5 430V431M1144.5 428V434M1145.5 430V432M1146.5 428V432M1147.5 430V433M1148.5 430V431M1149.5 430V431M1150.5 430V431M1151.5 430V434M1152.5 430V431M1153.5 426V434M1154.5 430V432M1155.5 430V435M1156.5 430V431M1157.5 430V432M1158.5 430V431M1159.5 430V431M1160.5 426V433M1161.5 430V431M1162.5 430V431M1163.5 430V431M1164.5 426V432M1165.5 430V434M1166.5 421V435M1167.5 430V435M1168.5 430V431M1169.5 430V431M1170.5 428V431M1171.5 430V431M1172.5 430V431M1173.5 430V431M1174.5 430V433M1175.5 430V432M1176.5 424V436M1177.5 430V431M1178.5 430V431M1179.5 430V433M1180.5 430V431M1181.5 426V431M1182.5 420V436M1183.5 430V431M1184.5 430V434M1185.5 430V431M1186.5 430V431M1187.5 430V433M1188.5 430V431M1189.5 430V434M1190.5 423V431M1191.5 428V432M1192.5 430V431M1193.5 430V431M1194.5 430V431M1195.5 430V431M1196.5 430V431M1197.5 430V431M1198.5 430V431M1199.5 430V431M1200.5 430V433M1201.5 430V431M1202.5 430V433M1203.5 430V433M1204.5 423V436M1205.5 430V435M1206.5 421V435M1207.5 426V434M1208.5 430V431M1209.5 430V431M1210.5 430V435M1211.5 430V431M1212.5 430V432M1213.5 430V435M1214.5 425V436M1215.5 430V431M1216.5 428V435M1217.5 430V431M1218.5 430V431M1219.5 430V434M1220.5 430V431M1221.5 430V434M1222.5 428V435M1223.5 430V433M1224.5 430V431M1225.5 430V431M1226.5 430V431M1227.5 422V436M1228.5 429V433M1229.5 429V435M1230.5 430V431M1231.5 429V433M1232.5 428V431M1233.5 427V432M1234.5 429V432M1235.5 430V433M1236.5 430V435M1237.5 430V434M1238.5 430V431M1239.5 430V431M1240.5 430V433M1241.5 430V431M1242.5 430V435M1243.5 430V435M1244.5 430V431M1245.5 426V435M1246.5 430V432M1247.5 430V431M1248.5 430V432M1249.5 430V431M1250.5 428V433M1251.5 427V432M1252.5 430V431M1253.5 430V431M1254.5 422V435M1255.5 430V433M1256.5 430V434M1257.5 430V432M1258.5 430V433M1259.5 430V431M1260.5 423V434M1261.5 430V431M1262.5 430V431M1263.5 430V431M1264.5 430V431M1265.5 430V431M1266.5 430V431M1267.5 427V434M1268.5 430V431M1269.5 421V435M1270.5 430V432M1271.5 430V431M1272.5 430V431M1273.5 429V435M1274.5 430V431M1275.5 430V431M1276.5 430V431M1277.5 430V435M1278.5 427V433M1279.5 429V433M1280.5 430V431M1281.5 430V435M1282.5 427V431M1283.5 430V434M1284.5 428V435M1285.5 430V431M1286.5 430V431M1287.5 430V433M1288.5 430V431M1289.5 430V431M1290.5 430V433M1291.5 430V431M1292.5 425V432M1293.5 425V432M1294.5 428V433M1295.5 426V434M1296.5 430V434M1297.5 430V431M1298.5 430V434M1299.5 430V431M1300.5 430V431M1301.5 430V431M1302.5 430V431M1303.5 430V431M1304.5 430V432M1305.5 430V434M1306.5 430V431M1307.5 430V431M1308.5 430V434M1309.5 430V434M1310.5 430V431M1311.5 430V434M1312.5 430V433M1313.5 430V431M1314.5 430V433M1315.5 430V432M1316.5 430V431M1317.5 428V433M1318.5 430V431M1319.5 430V431M1320.5 430V431M1321.5 430V431M1322.5 430V433M1323.5 430V432M1324.5 430V431M1325.5 430V431M1326.5 430V431M1327.5 424V435M1328.5 428V434M1329.5 430V435M1330.5 430V431M1331.5 430V431M1332.5 430V435M1333.5 430V433M1334.5 430V432M1335.5 430V431M1336.5 430V431M1337.5 430V433M1338.5 430V433M1339.5 430V433M1340.5 430V431M1341.5 426V431M1342.5 430V431M1343.5 430V431M1344.5 430V431M1345.5 422V436M1346.5 430V432M1347.5 429V431M1348.5 430V433M1349.5 423V435M1350.5 430V431M1351.5 430V432M1352.5 430V431M1353.5 429V435M1354.5 430V431M1355.5 430V435M1356.5 430V433M1357.5 430V432M1358.5 429V433M1359.5 430V432M1360.5 430V435M1361.5 430V435M1362.5 430V432M1363.5 430V432M1364.5 430V431M1365.5 430V431M1366.5 426V432M1367.5 430V432M1368.5 430V432M1369.5 430V431M1370.5 430V431M1371.5 430V433M1372.5 430V431M1373.5 430V431M1374.5 430V431M1375.5 430V431M1376.5 428V432M1377.5 430V431M1378.5 428V433M1379.5 430V431M1380.5 430V431M1381.5 425V432M1382.5 430V432M1383.5 430V431M1384.5 430V431M1385.5 428V434M1386.5 430V431M1387.5 430V431M1388.5 430V434M1389.5 430V435M1390.5 430V431M1391.5 430V431M1392.5 426V435M1393.5 430V432M1394.5 430V433M1395.5 430V433M1396.5 430V432M1397.5 430V431M1398.5 429V433M1399.5 430V431M1400.5 430V432M1401.5 430V431M1402.5 430V431M1403.5 421V431M1404.5 422V435M1405.5 430V431M1406.5 430V432M1407.5 430V431M1408.5 430V433M1409.5 430V434M1410.5 430V431M1411.5 430V433M1412.5 430V432M1413.5 427V431M1414.5 430V431M1415.5 428V434M1416.5 430V434M1417.5 430V433M1418.5 430V431M1419.5 430V431M1420.5 430V433M1421.5 430V431M1422.5 429V432M1423.5 430V434M1424.5 430V431M1425.5 430V431M1426.5 430V433M1427.5 430V431M1428.5 430V432M1429.5 430V435M1430.5 426V433M1431.5 423V433M1432.5 426V435M1433.5 430V431M1434.5 430V431M1435.5 430V434M1436.5 430V432M1437.5 430V433M1438.5 430V431M1439.5 430V435M1440.5 425V435M1441.5 430V431M1442.5 430V434M1443.5 430V431M1444.5 424V432M1445.5 430V435M1446.5 430V431M1447.5 430V431M1448.5 430V432M1449.5 426V436M1450.5 430V431M1451.5 427V431M1452.5 430V431M1453.5 421V431M1454.5 430V431M1455.5 430V431M1456.5 426V434M1457.5 430V433M1458.5 430V432M1459.5 426V432M1460.5 430V431M1461.5 430V431M1462.5 430V431M1463.5 430V431M1464.5 430V431M1465.5 430V431M1466.5 420V431M1467.5 428V433M1468.5 430V434M1469.5 426V431M1470.5 430V431M1471.5 430V431M1472.5 430V433M1473.5 430V431M1474.5 426V431M1475.5 430V431M1476.5 430V434M1477.5 430V431M1478.5 426V435M1479.5 430V432M1480.5 430V431M1481.5 430V431M1482.5 430V435M1483.5 430V433M1484.5 430V433M1485.5 430V435M1486.5 430V432M1487.5 430V431M1488.5 430V433M1489.5 430V435M1490.5 430V431M1491.5 420V436M1492.5 430V434M1493.5 430V431M1494.5 430V434M1495.5 427V434M1496.5 430V432M1497.5 430V431M1498.5 429V432M1499.5 430V431M1500.5 430V435M1501.5 424V433M1502.5 421V434M1503.5 430V431M1504.5 430V431M1505.5 430V433M1506.5 420V431M1507.5 430V432M1508.5 430V431M1509.5 422V436M1510.5 430V432M1511.5 430V433M1512.5 428V431M1513.5 430V432M1514.5 430V435M1515.5 430V435M1516.5 430V431M1517.5 430V431M1518.5 430V434M1519.5 430V431M1520.5 430V435M1521.5 428V435M1522.5 430V431M1523.5 430V431M1524.5 430V432M1525.5 428V431M1526.5 428V432M1527.5 430V431M1528.5 430V432M1529.5 430V432M1530.5 430V431M1531.5 430V431M1532.5 430V433M1533.5 430V432M1534.5 429V431M1535.5 430V431M1536.5 430V431M1537.5 420V431M1538.5 430V433M1539.5 422V431M1540.5 427V432M1541.5 422V433M1542.5 430V431M1543.5 430V433M1544.5 430V432M1545.5 430V431M1546.5 430V434M1547.5 430V434M1548.5 430V431M1549.5 430V431M1550.5 430V431M1551.5 430V431M1552.5 430V431M1553.5 425V432M1554.5 430V431M1555.5 426V432M1556.5 426V434M1557.5 430V431M1558.5 430V431M1559.5 430V434M1560.5 430V432M1561.5 429V432M1562.5 430V432M1563.5 429V431M1564.5 430V431M1565.5 430V431M1566.5 430V433M1567.5 421V434M1568.5 430V431M1569.5 427V432M1570.5 420V432M1571.5 430V434M1572.5 430V433M1573.5 430V435M1574.5 430V434M1575.5 430V432M1576.5 430V434M1577.5 430V433M1578.5 428V432M1579.5 430V433M1580.5 430V431M1581.5 430V431M1582.5 430V431M1583.5 430V433M1584.5 430V432M1585.5 430V431M1586.5 430V435M1587.5 430V431M1588.5 429V433M1589.5 430V431M1590.5 428V432M1591.5 430V431M1592.5 430V431M1593.5 430V431M1594.5 430V434M1595.5 430V431M1596.5 430V431M1597.5 429V435M1598.5 429V435M1599.5 430V431M1600.5 430V433M1601.5 428V434M1602.5 430V431M1603.5 430V434M1604.5 426V433M1605.5 427V434M1606.5 430V431M1607.5 430V431M1608.5 420V434M1609.5 430V433M1610.5 430V435M1611.5 430V431M1612.5 430V434M1613.5 430V432M1614.5 430V431M1615.5 430V431M1616.5 430V431M1617.5 430V435M1618.5 430V431M1619.5 427V433M1620.5 430V433M1621.5 430V431M1622.5 430V435M1623.5 430V434M1624.5 430V431M1625.5 430V435M1626.5 430V433M1627.5 430V431M1628.5 430V431M1629.5 430V431M1630.5 430V433M1631.5 427V432M1632.5 430V431M1633.5 430V431M1634.5 430V432M1635.5 430V431M1636.5 430V433M1637.5 430V431M1638.5 426V434M1639.5 428V433M1640.5 430V435M1641.5 430V432M1642.5 430V434M1643.5 430V432M1644.5 430V434M1645.5 426V431M1646.5 430V431M1647.5 430V433M1648.5 430V431M1649.5 430V434M1650.5 430V431M1651.5 430V432M1652.5 427V435M1653.5 430V432M1654.5 429V432M1655.5 430V434M1656.5 430V431M1657.5 426V435M1658.5 430V431M1659.5 421V434M1660.5 430V435M1661.5 426V435M1662.5 430V431M1663.5 430V432M1664.5 430V431M1665.5 430V431M1666.5 430V431M1667.5 428V431M1668.5 430V431M1669.5 430V431M1670.5 430V433M1671.5 427V434M1672.5 430V435M1673.5 430V435M1674.5 423V432M1675.5 430V434M1676.5 430V433M1677.5 428V431M1678.5 430V434M1679.5 430V431M1680.5 430V434M1681.5 430V434M1682.5 430V431M1683.5 430V431M1684.5 428V431M1685.5 430V431M1686.5 430V432M1687.5 430V431M1688.5 430V435M1689.5 430V435M1690.5 430V431M1691.5 430V435M1692.5 430V431M1693.5 430V433M1694.5 430V432M1695.5 430V435M1696.5 430V433M1697.5 430V432M1698.5 430V432M1699.5 430V435M1700.5 430V433M1701.5 430V435M1702.5 430V431M1703.5 430V431M1704.5 430V435M1705.5 430V431M1706.5 430V432M1707.5 430V434M1708.5 430V431M1709.5 430V431M1710.5 430V431M1711.5 430V431M1712.5 430V431M1713.5 428V431M1714.5 430V431M1715.5 430V431M1716.5 430V431M1717.5 430V431M1718.5 422V434M1719.5 430V431M1720.5 430V431M1721.5 430V431M1722.5 430V433M1723.5 430V431M1724.5 430V435M1725.5 430V432M1726.5 430V434M1727.5 430V431M1728.5 430V433M1729.5 430V431M1730.5 430V434M1731.5 430V435M1732.5 430V433M1733.5 430V431M1734.5 430V434M1735.5 430V434M1736.5 430V431M1737.5 429V435M1738.5 430V433M1739.5 430V431M1740.5 430V431M1741.5 430V434M1742.5 430V433M1743.5 430V434M1744.5 430V435M1745.5 430V431M1746.5 430V431M1747.5 430V435M1748.5 430V432M344.5 430V562M345.5 430V562M345.5 561V563M346.5 403V431M347.5 403V431M350.5 430V595M351.5 430V595M351.5 594V596M349.5 417V431M350.5 420V431M355.5 430V593M356.5 430V593M356.5 592V594M358.5 376V431M361.5 430V597M362.5 430V597M362.5 596V598M361.5 586V667M366.5 430V596M366.5 595V597M372.5 430V596M373.5 430V596M373.5 595V597M370.5 391V431M371.5 393V431M377.5 430V593M378.5 430V593M377.5 592V594M378.5 586V642M383.5 430V598M384.5 430V598M384.5 597V599M383.5 586V615M388.5 430V596M389.5 430V596M388.5 595V597M391.5 393V431M394.5 430V596M395.5 430V596M395.5 595V597M394.5 586V642M399.5 430V597M400.5 430V597M399.5 596V598M399.5 586V658M405.5 430V597M406.5 430V597M406.5 596V598M406.5 586V619M410.5 430V594M411.5 430V594M411.5 593V595M413.5 379V431M410.5 586V647M416.5 430V598M417.5 430V598M417.5 597V599M415.5 379V431M416.5 381V431M417.5 586V683M421.5 430V594M422.5 430V594M422.5 593V595M421.5 586V629M427.5 430V599M428.5 430V599M428.5 598V600M432.5 430V593M433.5 430V593M433.5 592V594M432.5 586V616M438.5 430V595M439.5 430V595M438.5 594V596M443.5 430V599M444.5 430V599M444.5 598V600M442.5 406V431M449.5 430V599M449.5 598V600M454.5 430V596M455.5 430V596M455.5 595V597M454.5 586V620M460.5 430V593M460.5 592V594M461.5 586V629M465.5 430V593M465.5 592V594M463.5 385V431M471.5 430V578M472.5 430V578M471.5 577V579M476.5 430V597M477.5 430V597M477.5 596V598M474.5 408V431M482.5 430V598M483.5 430V598M483.5 597V599M485.5 385V431M486.5 420V431M487.5 430V599M488.5 598V600M493.5 430V593M494.5 430V593M493.5 592V594M495.5 366V431M498.5 430V594M499.5 593V595M497.5 368V431M504.5 430V489M504.5 488V490M509.5 430V598M509.5 597V599M508.5 369V431M509.5 377V431M515.5 430V599M515.5 598V600M520.5 430V593M521.5 430V593M521.5 592V594M521.5 586V659M526.5 430V594M527.5 430V594M526.5 593V595M524.5 378V431M525.5 413V431M527.5 586V658M531.5 430V595M532.5 430V595M531.5 594V596M537.5 430V596M538.5 595V597M538.5 586V683M542.5 430V598M543.5 430V598M542.5 597V599M541.5 368V431M542.5 399V431M548.5 430V599M549.5 430V599M549.5 598V600M553.5 430V596M554.5 430V596M553.5 595V597M553.5 586V681M559.5 430V593M560.5 430V593M559.5 592V594M562.5 384V431M563.5 386V431M560.5 586V623M564.5 430V598M565.5 597V599M570.5 430V596M571.5 430V596M570.5 595V597M571.5 586V651M575.5 430V598M576.5 597V599M577.5 404V431M575.5 586V682M581.5 430V595M582.5 430V595M581.5 594V596M584.5 416V431M582.5 586V639M586.5 430V594M586.5 593V595M592.5 430V596M593.5 430V596M592.5 595V597M597.5 430V596M597.5 595V597M598.5 586V628M603.5 430V461M604.5 460V462M608.5 430V596M608.5 595V597M611.5 384V431M614.5 430V595M615.5 594V596M619.5 430V593M620.5 430V593M619.5 592V594M620.5 586V679M625.5 430V468M626.5 430V468M625.5 467V469M624.5 381V431M630.5 430V599M631.5 430V599M631.5 598V600M630.5 586V614M636.5 430V599M637.5 430V599M637.5 598V600M636.5 586V679M641.5 430V595M641.5 594V596M644.5 396V431M642.5 586V658M647.5 430V594M648.5 430V594M648.5 593V595M649.5 389V431M648.5 586V610M652.5 430V598M653.5 597V599M658.5 430V593M659.5 430V593M659.5 592V594M661.5 380V431M662.5 381V431M663.5 430V599M664.5 430V599M664.5 598V600M664.5 586V626M669.5 430V476M670.5 430V476M670.5 475V477M674.5 430V599M675.5 598V600M676.5 392V431M680.5 430V595M681.5 594V596M680.5 586V676M685.5 430V593M686.5 592V594M684.5 391V431M691.5 430V598M692.5 430V598M691.5 597V599M689.5 385V431M696.5 430V597M697.5 596V598M694.5 400V431M695.5 409V431M697.5 586V636M702.5 430V599M703.5 430V599M702.5 598V600M707.5 430V595M708.5 594V596M710.5 386V431M713.5 430V595M713.5 594V596M713.5 586V675M718.5 430V577M719.5 576V578M724.5 430V599M725.5 430V599M725.5 598V600M724.5 586V602M729.5 430V593M729.5 592V594M731.5 394V431M732.5 398V431M729.5 586V623M735.5 430V594M736.5 430V594M735.5 593V595M737.5 410V431M740.5 430V595M741.5 430V595M741.5 594V596M743.5 386V431M744.5 389V431M746.5 430V595M747.5 430V595M746.5 594V596M751.5 430V472M751.5 471V473M753.5 365V431M757.5 430V596M758.5 595V597M762.5 430V593M763.5 430V593M763.5 592V594M761.5 420V431M768.5 430V599M769.5 430V599M768.5 598V600M768.5 586V647M773.5 430V595M774.5 430V595M773.5 594V596M771.5 405V431M772.5 423V431M773.5 586V626M779.5 430V599M780.5 430V599M780.5 598V600M784.5 430V525M784.5 524V526M790.5 430V599M791.5 430V599M790.5 598V600M792.5 386V431M795.5 430V596M796.5 430V596M795.5 595V597M795.5 586V615M801.5 430V599M802.5 598V600M803.5 378V431M802.5 586V639M806.5 430V595M807.5 430V595M807.5 594V596M812.5 430V598M813.5 430V598M813.5 597V599M812.5 586V620M817.5 430V599M818.5 430V599M817.5 598V600M818.5 586V635M823.5 430V599M824.5 430V599M824.5 598V600M821.5 399V431M823.5 586V610M828.5 430V595M829.5 430V595M829.5 594V596M830.5 379V431M828.5 586V634M834.5 430V599M835.5 430V599M834.5 598V600M837.5 401V431M835.5 586V681M839.5 430V598M840.5 430V598M839.5 597V599M845.5 430V599M846.5 430V599M846.5 598V600M844.5 404V431M850.5 430V598M851.5 430V598M851.5 597V599M852.5 414V431M853.5 427V431M850.5 586V652M856.5 430V577M857.5 430V577M857.5 576V578M856.5 586V641M861.5 430V598M862.5 597V599M864.5 381V431M862.5 586V656M867.5 430V595M868.5 430V595M868.5 594V596M869.5 405V431M868.5 586V610M872.5 430V594M873.5 430V594M872.5 593V595M872.5 586V675M878.5 430V599M879.5 598V600M879.5 586V620M883.5 430V599M884.5 430V599M884.5 598V600M886.5 387V431M887.5 394V431M883.5 586V659M889.5 430V599M890.5 430V599M890.5 598V600M894.5 430V522M895.5 430V522M895.5 521V523M900.5 430V598M901.5 597V599M902.5 359V431M903.5 380V431M900.5 586V680M905.5 430V595M906.5 430V595M905.5 594V596M905.5 586V615M911.5 430V597M912.5 430V597M912.5 596V598M913.5 390V431M916.5 430V596M916.5 595V597M922.5 430V598M923.5 430V598M922.5 597V599M925.5 402V431M927.5 430V594M927.5 593V595M927.5 586V643M933.5 430V596M933.5 595V597M933.5 586V628M938.5 430V596M938.5 595V597M944.5 430V599M944.5 598V600M949.5 430V595M950.5 430V595M950.5 594V596M950.5 586V672M955.5 430V599M956.5 430V599M955.5 598V600M953.5 382V431M956.5 586V655M960.5 430V489M961.5 430V489M961.5 488V490M959.5 371V431M966.5 430V593M967.5 430V593M966.5 592V594M971.5 430V599M972.5 430V599M971.5 598V600M977.5 430V593M978.5 430V593M977.5 592V594M982.5 430V598M983.5 430V598M982.5 597V599M984.5 376V431M988.5 430V599M988.5 598V600M991.5 386V431M989.5 586V616M993.5 430V599M994.5 598V600M999.5 430V599M999.5 598V600M1004.5 430V593M1005.5 592V594M1010.5 430V470M1011.5 469V471M1010.5 586V618M1015.5 430V597M1016.5 430V597M1016.5 596V598M1021.5 430V597M1022.5 430V597M1022.5 596V598M1026.5 430V599M1027.5 598V600M1024.5 377V431M1032.5 430V599M1032.5 598V600M1032.5 586V615M1037.5 430V594M1038.5 430V594M1037.5 593V595M1043.5 430V596M1043.5 595V597M1041.5 405V431M1048.5 430V598M1049.5 430V598M1048.5 597V599M1054.5 430V596M1055.5 430V596M1055.5 595V597M1059.5 430V594M1059.5 593V595M1061.5 398V431M1060.5 586V621M1065.5 430V594M1065.5 593V595M1066.5 586V627M1070.5 430V593M1071.5 430V593M1070.5 592V594M1076.5 430V593M1077.5 430V593M1077.5 592V594M1079.5 414V431M1081.5 430V598M1082.5 597V599M1079.5 377V431M1080.5 415V431M1087.5 430V598M1088.5 430V598M1087.5 597V599M1088.5 586V658M1092.5 430V596M1093.5 430V596M1092.5 595V597M1098.5 430V598M1099.5 597V599M1099.5 586V646M1103.5 430V598M1104.5 430V598M1103.5 597V599M1104.5 586V654M1109.5 430V599M1110.5 598V600M1112.5 368V431M1113.5 416V431M1109.5 586V625M1114.5 430V595M1115.5 430V595M1114.5 594V596M1120.5 430V599M1121.5 598V600M1122.5 374V431M1126.5 430V511M1127.5 430V511M1126.5 510V512M1125.5 361V431M1126.5 364V431M1131.5 430V596M1132.5 430V596M1132.5 595V597M1132.5 586V639M1137.5 430V482M1138.5 430V482M1138.5 481V483M1142.5 430V594M1143.5 430V594M1142.5 593V595M1140.5 387V431M1141.5 390V431M1148.5 430V593M1148.5 592V594M1149.5 586V623M1153.5 430V594M1154.5 593V595M1151.5 385V431M1159.5 430V596M1160.5 430V596M1160.5 595V597M1159.5 586V607M1164.5 430V596M1165.5 430V596M1165.5 595V597M1165.5 586V609M1170.5 430V556M1171.5 430V556M1170.5 555V557M1168.5 388V431M1169.5 400V431M1175.5 430V560M1175.5 559V561M1175.5 586V605M1181.5 430V598M1182.5 430V598M1181.5 597V599M1182.5 586V673M1186.5 430V594M1187.5 430V594M1186.5 593V595M1192.5 430V599M1192.5 598V600M1195.5 391V431M1192.5 586V629M1197.5 430V597M1197.5 596V598M1203.5 430V594M1204.5 430V594M1204.5 593V595M1204.5 586V603M1208.5 430V594M1209.5 430V594M1209.5 593V595M1206.5 379V431M1207.5 393V431M1214.5 430V581M1215.5 430V581M1214.5 580V582M1214.5 586V608M1219.5 430V597M1220.5 430V597M1220.5 596V598M1221.5 376V431M1220.5 586V603M1225.5 430V593M1226.5 430V593M1226.5 592V594M1224.5 378V431M1225.5 411V431M1230.5 430V595M1231.5 594V596M1236.5 430V595M1237.5 430V595M1237.5 594V596M1241.5 430V596M1242.5 595V597M1244.5 403V431M1242.5 586V651M1247.5 430V553M1248.5 430V553M1247.5 552V554M1245.5 397V431M1252.5 430V594M1253.5 430V594M1252.5 593V595M1251.5 393V431M1258.5 430V596M1259.5 430V596M1258.5 595V597M1257.5 415V431M1263.5 430V597M1264.5 430V597M1264.5 596V598M1269.5 430V593M1270.5 430V593M1270.5 592V594M1274.5 430V597M1275.5 430V597M1274.5 596V598M1274.5 586V623M1280.5 430V595M1281.5 430V595M1280.5 594V596M1285.5 430V599M1286.5 430V599M1285.5 598V600M1287.5 364V431M1288.5 366V431M1291.5 430V597M1292.5 596V598M1296.5 430V599M1297.5 598V600M1297.5 586V666M1302.5 430V594M1303.5 593V595M1303.5 586V630M1307.5 430V596M1308.5 430V596M1307.5 595V597M1309.5 397V431M1313.5 430V595M1313.5 594V596M1318.5 430V598M1318.5 597V599M1324.5 430V593M1325.5 430V593M1324.5 592V594M1324.5 586V645M1329.5 430V595M1329.5 594V596M1329.5 586V631M1335.5 430V596M1336.5 430V596M1336.5 595V597M1336.5 586V632M1340.5 430V594M1341.5 430V594M1341.5 593V595M1342.5 402V431M1343.5 417V431M1346.5 430V596M1347.5 430V596M1347.5 595V597M1344.5 374V431M1351.5 430V593M1351.5 592V594M1354.5 376V431M1357.5 430V596M1358.5 430V596M1358.5 595V597M1358.5 586V627M1362.5 430V594M1363.5 430V594M1363.5 593V595M1368.5 430V596M1369.5 430V596M1368.5 595V597M1368.5 586V662M1373.5 430V593M1374.5 592V594M1372.5 405V431M1374.5 586V621M1379.5 430V596M1380.5 430V596M1379.5 595V597M1380.5 586V652M1384.5 430V597M1384.5 596V598M1386.5 368V431M1387.5 412V431M1384.5 586V679M1390.5 430V596M1391.5 430V596M1390.5 595V597M1391.5 586V644M1395.5 430V594M1395.5 593V595M1401.5 430V593M1401.5 592V594M1399.5 404V431M1400.5 415V431M1406.5 430V593M1407.5 430V593M1406.5 592V594M1407.5 586V647M1412.5 430V599M1413.5 430V599M1412.5 598V600M1412.5 586V611M1417.5 430V595M1418.5 430V595M1417.5 594V596M1423.5 430V597M1423.5 596V598M1422.5 406V431M1423.5 415V431M1428.5 430V599M1429.5 598V600M1427.5 378V431M1434.5 430V596M1435.5 430V596M1434.5 595V597M1435.5 586V655M1439.5 430V597M1440.5 596V598M1439.5 586V638M1445.5 430V594M1446.5 430V594M1446.5 593V595M1447.5 379V431M1448.5 428V431M1445.5 586V637M1450.5 430V593M1451.5 592V594M1456.5 430V598M1457.5 597V599M1461.5 430V595M1462.5 430V595M1462.5 594V596M1467.5 430V593M1468.5 430V593M1467.5 592V594M1472.5 430V535M1472.5 534V536M1471.5 412V431M1472.5 586V638M1478.5 430V599M1479.5 430V599M1478.5 598V600M1483.5 430V595M1484.5 430V595M1483.5 594V596M1489.5 430V594M1490.5 593V595M1494.5 430V593M1495.5 430V593M1495.5 592V594M1492.5 394V431M1500.5 430V599M1501.5 430V599M1500.5 598V600M1505.5 430V599M1505.5 598V600M1511.5 430V595M1512.5 430V595M1511.5 594V596M1511.5 586V613M1516.5 430V598M1517.5 430V598M1517.5 597V599M1519.5 369V431M1522.5 430V596M1523.5 595V597M1525.5 395V431M1523.5 586V627M1527.5 430V594M1528.5 430V594M1528.5 593V595M1526.5 383V431M1528.5 586V645M1533.5 430V594M1534.5 430V594M1534.5 593V595M1536.5 387V431M1538.5 430V594M1539.5 593V595M1537.5 362V431M1539.5 586V611M1544.5 430V598M1545.5 597V599M1545.5 586V613M1549.5 430V597M1550.5 596V598M1549.5 586V604M1555.5 430V594M1556.5 430V594M1556.5 593V595M1560.5 430V599M1561.5 598V600M1566.5 430V514M1567.5 513V515M1569.5 411V431M1570.5 415V431M1566.5 586V648M1571.5 430V594M1572.5 430V594M1572.5 593V595M1573.5 389V431M1574.5 401V431M1572.5 586V631M1577.5 430V594M1578.5 430V594M1578.5 593V595M1578.5 586V673M1582.5 430V597M1583.5 596V598M1582.5 586V626M1588.5 430V526M1589.5 430V526M1588.5 525V527M1593.5 430V596M1594.5 430V596M1594.5 595V597M1595.5 411V431M1596.5 412V431M1599.5 430V598M1600.5 430V598M1599.5 597V599M1597.5 376V431M1598.5 389V431M1604.5 430V595M1605.5 430V595M1604.5 594V596M1605.5 586V682M1610.5 430V599M1611.5 430V599M1610.5 598V600M1615.5 430V598M1616.5 430V598M1615.5 597V599M1616.5 586V649M1621.5 430V598M1622.5 430V598M1621.5 597V599M1620.5 391V431M1621.5 424V431M1626.5 430V598M1627.5 597V599M1624.5 421V431M1632.5 430V595M1633.5 430V595M1633.5 594V596M1637.5 430V594M1638.5 593V595M1643.5 430V509M1644.5 430V509M1643.5 508V510M1642.5 390V431M1644.5 586V644M1648.5 430V595M1649.5 430V595M1648.5 594V596M1654.5 430V598M1655.5 597V599M1657.5 365V431M1654.5 586V681M1659.5 430V598M1659.5 597V599M1658.5 376V431M1665.5 430V597M1666.5 596V598M1666.5 586V665M1670.5 430V595M1671.5 430V595M1671.5 594V596M1672.5 411V431M1670.5 586V658M1676.5 430V526M1677.5 430V526M1677.5 525V527M1681.5 430V595M1682.5 430V595M1681.5 594V596M1684.5 390V431M1687.5 430V598M1688.5 430V598M1688.5 597V599M1692.5 430V516M1692.5 515V517M1691.5 413V431M1692.5 586V609M1698.5 430V598M1699.5 597V599M1703.5 430V596M1704.5 430V596M1704.5 595V597M1702.5 398V431M1709.5 430V598M1709.5 597V599M1712.5 385V431M1713.5 408V431M1710.5 586V625M1714.5 430V555M1715.5 430V555M1715.5 554V556M1713.5 376V431M1714.5 426V431M1715.5 586V625M1720.5 430V595M1721.5 430V595M1720.5 594V596M1721.5 586V674M1725.5 430V594M1726.5 430V594M1726.5 593V595M1726.5 586V628M1731.5 430V596M1732.5 430V596M1732.5 595V597M1730.5 398V431M1731.5 415V431M1732.5 586V626M1736.5 430V599M1737.5 430V599M1737.5 598V600M1736.5 586V602M1742.5 430V594M1743.5 430V594M1742.5 593V595M1742.5 586V671M1747.5 430V595M1748.5 430V595M1747.5 594V596M1748.5 430V590M1755.5 586V590M1758.5 586V591M1782.5 586V591M1786.5 586V589M1793.5 586V589M1797.5 586V590M1798.5 586V589M1799.5 586V590M1800.5 586V590M1810.5 586V589M1824.5 586V589M1833.5 586V590M1838.5 586V591M1841.5 586V590M1847.5 586V589M1852.5 586V590M1863.5 586V589M1865.5 586V591M1873.5 586V591M1877.5 586V589" stroke="#f9141f" stroke-width="1" fill="none" shape-rendering="crispEdges"/><path d="M112.5 583V590M113.5 583V590M118.5 583V590M119.5 583V590M126.5 583V589M128.5 586V591M129.5 586V591M131.5 586V589M132.5 586V589M133.5 586V589M136.5 586V591M138.5 586V590M148.5 583V591M152.5 583V591M177.5 583V590M186.5 586V589M202.5 583V589M203.5 583V589M204.5 583V589M208.5 586V591M209.5 586V591M217.5 586V590M218.5 586V590M220.5 583V590M224.5 586V590M225.5 586V590M226.5 586V590M242.5 586V591M243.5 583V590M244.5 583V590M245.5 583V590M250.5 586V591M251.5 586V589M252.5 586V589M253.5 586V589M260.5 586V590M264.5 586V589M272.5 586V589M281.5 583V589M304.5 586V590M313.5 586V589M317.5 586V590M318.5 583V589M322.5 586V591M325.5 586V590M326.5 586V590M338.5 393V587M338.5 432V433M339.5 432V433M340.5 432V433M341.5 432V433M342.5 432V433M343.5 432V433M344.5 432V433M341.5 432V438M343.5 432V619M345.5 582V590M347.5 580V596M352.5 582V592M353.5 582V592M357.5 577V593M360.5 582V594M362.5 584V591M367.5 584V591M372.5 583V589M376.5 582V590M380.5 579V598M383.5 577V593M386.5 578V598M389.5 583V592M392.5 585V591M393.5 585V591M394.5 585V591M394.5 582V590M397.5 580V597M399.5 583V593M404.5 582V593M409.5 582V591M414.5 582V589M418.5 576V593M422.5 581V592M427.5 581V593M432.5 577V592M436.5 578V594M439.5 584V593M443.5 585V591M444.5 585V591M445.5 585V591M446.5 577V596M450.5 581V591M455.5 576V594M457.5 580V591M461.5 577V597M463.5 583V590M465.5 580V593M470.5 580V594M475.5 584V591M476.5 584V591M478.5 580V594M482.5 575V597M486.5 580V590M489.5 575V598M494.5 577V591M496.5 583V593M497.5 583V593M498.5 583V593M500.5 583V594M504.5 582V589M508.5 584V592M510.5 585V590M511.5 585V590M514.5 585V591M515.5 585V591M518.5 582V589M523.5 584V592M526.5 583V591M531.5 585V592M532.5 585V592M533.5 585V592M536.5 583V593M540.5 583V592M541.5 583V592M542.5 584V594M546.5 582V591M551.5 584V592M552.5 584V592M556.5 577V592M559.5 576V596M563.5 575V596M567.5 580V591M572.5 584V591M577.5 584V593M579.5 585V591M580.5 585V591M581.5 585V591M584.5 575V597M588.5 580V589M591.5 582V593M595.5 577V591M598.5 580V594M603.5 581V592M608.5 585V591M609.5 585V591M610.5 582V593M611.5 582V593M612.5 582V593M615.5 580V594M620.5 581V594M625.5 581V590M630.5 579V591M634.5 580V592M638.5 579V595M642.5 585V590M643.5 585V590M644.5 584V594M647.5 582V593M648.5 582V593M651.5 579V594M654.5 583V593M655.5 583V593M659.5 581V593M663.5 585V592M664.5 585V592M665.5 585V592M666.5 581V593M671.5 584V589M675.5 581V594M680.5 585V593M681.5 585V593M683.5 581V589M688.5 584V589M692.5 585V592M693.5 585V592M695.5 576V597M700.5 580V592M703.5 577V592M708.5 582V592M711.5 582V591M716.5 580V590M719.5 581V592M721.5 582V593M726.5 582V591M730.5 582V591M735.5 581V593M738.5 583V593M741.5 580V593M745.5 581V592M750.5 582V592M752.5 575V592M755.5 584V591M757.5 578V597M761.5 582V593M766.5 581V593M771.5 576V598M774.5 583V592M777.5 582V593M781.5 582V590M784.5 580V591M789.5 576V596M792.5 583V594M796.5 585V590M797.5 585V590M801.5 585V592M802.5 585V592M805.5 580V593M807.5 583V593M812.5 582V592M813.5 582V592M814.5 582V592M814.5 581V592M816.5 582V592M820.5 583V591M821.5 583V591M822.5 583V591M824.5 580V593M829.5 584V593M830.5 584V593M831.5 584V593M831.5 583V592M832.5 583V592M833.5 583V590M834.5 583V590M837.5 583V591M842.5 581V592M846.5 585V593M847.5 585V593M848.5 585V593M849.5 580V598M852.5 580V592M856.5 581V592M861.5 583V594M865.5 581V592M869.5 584V592M871.5 582V594M873.5 584V594M877.5 578V593M879.5 576V591M884.5 583V591M889.5 584V593M894.5 583V591M895.5 583V591M896.5 583V591M896.5 584V591M899.5 582V592M904.5 581V589M908.5 582V593M910.5 583V591M911.5 583V591M913.5 575V592M916.5 580V594M920.5 578V591M924.5 581V591M926.5 580V593M928.5 584V591M932.5 583V593M933.5 583V593M934.5 583V593M935.5 583V592M936.5 583V592M939.5 583V592M941.5 584V590M942.5 584V590M944.5 576V597M946.5 580V590M948.5 582V589M950.5 576V592M953.5 584V592M954.5 584V592M957.5 582V589M959.5 583V594M961.5 583V593M962.5 583V593M966.5 585V593M967.5 585V593M971.5 585V590M972.5 585V590M973.5 585V590M974.5 584V590M979.5 583V590M982.5 584V592M985.5 583V593M988.5 575V591M992.5 583V593M996.5 582V589M1000.5 581V590M1004.5 581V594M1007.5 584V589M1012.5 583V591M1016.5 583V591M1018.5 581V590M1022.5 579V596M1024.5 582V592M1027.5 582V590M1031.5 580V590M1035.5 582V590M1038.5 580V598M1042.5 579V598M1046.5 582V591M1051.5 583V591M1052.5 583V591M1053.5 583V591M1055.5 579V597M1059.5 576V598M1061.5 575V598M1065.5 581V591M1070.5 575V595M1072.5 579V598M1075.5 580V594M1079.5 576V591M1082.5 578V597M1084.5 584V589M1088.5 581V589M1090.5 582V591M1091.5 582V591M1093.5 582V590M1096.5 583V592M1100.5 582V594M1103.5 580V592M1107.5 583V593M1109.5 580V590M1113.5 582V589M1116.5 585V591M1117.5 585V591M1118.5 575V598M1121.5 580V594M1125.5 584V593M1128.5 582V590M1129.5 582V590M1133.5 583V590M1136.5 578V594M1138.5 578V591M1143.5 575V597M1146.5 584V594M1150.5 580V590M1152.5 581V593M1157.5 581V591M1160.5 580V595M1163.5 585V592M1164.5 585V592M1165.5 579V592M1167.5 579V598M1169.5 581V592M1172.5 584V594M1175.5 582V594M1177.5 583V592M1180.5 584V590M1182.5 584V591M1183.5 584V591M1187.5 582V590M1190.5 582V589M1194.5 583V591M1195.5 583V591M1196.5 583V591M1197.5 576V597M1199.5 584V590M1200.5 584V590M1204.5 582V591M1206.5 584V592M1210.5 582V594M1212.5 580V597M1217.5 580V594M1222.5 580V592M1227.5 585V590M1228.5 585V590M1229.5 585V590M1231.5 576V592M1233.5 576V597M1236.5 577V591M1241.5 580V593M1245.5 579V597M1248.5 582V590M1252.5 580V592M1255.5 581V589M1257.5 583V594M1260.5 582V594M1263.5 581V589M1267.5 576V592M1271.5 580V591M1276.5 582V590M1278.5 579V591M1280.5 580V594M1285.5 579V593M1289.5 580V590M1293.5 580V591M1295.5 582V593M1296.5 582V593M1297.5 582V593M1298.5 575V593M1303.5 582V591M1306.5 583V591M1307.5 583V591M1310.5 576V598M1314.5 584V592M1318.5 578V595M1320.5 583V591M1325.5 580V590M1327.5 584V593M1332.5 580V590M1335.5 584V591M1336.5 584V591M1337.5 584V591M1337.5 578V598M1342.5 581V590M1346.5 582V593M1347.5 582V593M1348.5 582V593M1348.5 584V592M1349.5 584V592M1350.5 584V592M1352.5 579V595M1354.5 580V593M1356.5 580V589M1358.5 580V595M1363.5 580V595M1368.5 584V589M1370.5 577V596M1375.5 584V594M1378.5 581V594M1381.5 581V592M1385.5 584V593M1389.5 578V596M1393.5 583V590M1398.5 583V589M1401.5 580V590M1403.5 583V591M1408.5 578V591M1412.5 582V593M1414.5 585V591M1415.5 585V591M1419.5 584V593M1424.5 581V594M1428.5 580V590M1432.5 576V598M1437.5 579V596M1442.5 576V593M1446.5 582V594M1451.5 584V590M1452.5 584V590M1454.5 580V594M1457.5 581V590M1462.5 583V592M1466.5 583V591M1469.5 581V594M1473.5 582V589M1478.5 584V590M1482.5 584V590M1485.5 582V594M1489.5 579V598M1494.5 579V594M1496.5 576V592M1501.5 580V591M1505.5 581V590M1510.5 584V589M1514.5 581V591M1516.5 584V590M1517.5 584V590M1520.5 579V598M1523.5 580V591M1527.5 584V593M1528.5 584V593M1530.5 580V592M1535.5 578V596M1537.5 580V590M1541.5 580V594M1545.5 582V593M1546.5 582V593M1547.5 582V593M1547.5 581V591M1552.5 584V594M1557.5 582V590M1561.5 581V591M1564.5 584V591M1569.5 580V591M1573.5 584V592M1574.5 584V592M1578.5 577V594M1580.5 584V591M1581.5 584V591M1584.5 581V589M1589.5 577V592M1591.5 580V593M1594.5 580V589M1598.5 578V594M1601.5 583V593M1603.5 577V597M1605.5 581V594M1609.5 584V590M1611.5 585V593M1612.5 585V593M1613.5 585V593M1616.5 578V594M1620.5 582V594M1625.5 580V598M1627.5 575V598M1630.5 580V594M1633.5 580V592M1637.5 581V594M1639.5 583V592M1643.5 583V591M1648.5 580V598M1651.5 582V592M1655.5 581V592M1660.5 582V594M1665.5 580V593M1669.5 575V593M1674.5 583V592M1678.5 583V589M1683.5 583V594M1685.5 584V594M1687.5 576V593M1692.5 582V593M1697.5 584V591M1702.5 584V590M1707.5 584V593M1708.5 584V593M1710.5 582V591M1713.5 585V593M1714.5 585V593M1715.5 585V593M1716.5 577V595M1720.5 584V591M1721.5 584V591M1724.5 583V593M1725.5 583V593M1726.5 583V590M1727.5 583V590M1728.5 583V590M1730.5 582V594M1732.5 582V593M1733.5 582V593M1735.5 582V593M1737.5 583V594M1741.5 582V592M1742.5 582V592M1746.5 575V594M1749.5 581V588M1761.5 583V588M1764.5 584V588M1771.5 582V589M1777.5 583V588M1786.5 581V587M1791.5 581V588M1806.5 582V590M1811.5 582V589M1822.5 582V587M1834.5 585V589M1845.5 582V588M1850.5 581V588M1858.5 581V587M1862.5 582V590M1869.5 583V589M110 586.5H338M344 586.5H1879" stroke="#0000ff" stroke-width="1" fill="none" shape-rendering="crispEdges"/></svg>
<div class="a" style="left:70px;top:161px;width:9px;height:9px;background:#0000ff;border:1px solid #000"></div><div class="a" style="left:1912px;top:161px;width:7px;height:9px;background:#ff2030;border:1px solid #000;border-right:none"></div><div class="a" style="left:106px;top:1005px;width:9px;height:9px;background:#fff;border:1px solid #000"></div><div class="a" style="left:1874px;top:1004px;width:11px;height:11px;border-radius:50%;background:#008080;border:1px solid #000"></div><svg class="a" style="left:332px;top:496px;" width="13" height="13" viewBox="0 0 13 13"><path d="M6.5 1L12 6.5 6.5 12 1 6.5z" fill="#f4f000" stroke="#707000" stroke-width="1"/></svg><div class="a" style="left:72px;top:1030px;width:37px;height:14px;background:#7b7bf8"></div><div class="t" style="left:81.00px;top:1033.31px;font-size:9.60px;line-height:10.73px;color:#ececff;transform:scaleX(1.1020);">x1,0</div><div class="t" style="left:111.50px;top:1031.83px;font-size:12.35px;line-height:13.79px;color:#000;transform:scaleX(1.0172);">µs</div><div class="a" style="left:1880px;top:1030px;width:37px;height:14px;background:#f89898"></div><div class="t" style="left:1889.00px;top:1033.31px;font-size:9.60px;line-height:10.73px;color:#fff0f0;transform:scaleX(1.1020);">x1,0</div>
<div class="a" style="left:70px;top:1045px;width:1851px;height:1px;background:#cfcdca"></div><div class="t" style="left:75.00px;top:1054.29px;font-size:13.72px;line-height:15.32px;color:#474747;transform:scaleX(1.1155);">Stopped</div><div class="a" style="left:142px;top:1050px;width:26px;height:25px;background:linear-gradient(#ffffff,#f4f3f2);border:1px solid #b9b6b1;border-radius:4px"></div><svg class="a" style="left:150px;top:1055px;" width="11" height="14" viewBox="0 0 11 14"><path d="M1 1v12l9-6z" fill="#2e8b2e"/></svg><div class="a" style="left:172px;top:1050px;width:26px;height:25px;background:linear-gradient(#f0efee,#dcdad7);border:1px solid #b9b6b1;border-radius:4px"></div><div class="a" style="left:180px;top:1058px;width:10px;height:10px;background:#ff1a00;box-shadow:0 0 0 1px #fff"></div><div class="a" style="left:206px;top:1053px;width:1px;height:15px;background:#d8d6d3"></div><div class="t" style="left:215.30px;top:1054.59px;font-size:13.72px;line-height:15.32px;color:#474747;transform:scaleX(1.0714);">Trigger</div><div class="t" style="left:294.50px;top:1054.59px;font-size:13.72px;line-height:15.32px;color:#474747;transform:scaleX(1.0279);">Single</div><div class="a" style="left:367px;top:1049px;width:26px;height:26px;background:linear-gradient(#ffffff,#f4f3f2);border:1px solid #b9b6b1;border-radius:4px"></div><svg class="a" style="left:371px;top:1052px;" width="19" height="19" viewBox="0 0 19 19"><rect x="7" y="4" width="7" height="14" fill="#c7dcf5"/><path d="M1 14.5h4.5V7.5h5v7h6.5" stroke="#000" stroke-width="1.3" fill="none"/><circle cx="10.2" cy="11.8" r="1.7" fill="#10d010"/><path d="M10 2h7.5v7.5z" fill="#000"/></svg><div class="a" style="left:401px;top:1053px;width:1px;height:15px;background:#d8d6d3"></div><div class="t" style="left:425.00px;top:1054.59px;font-size:13.72px;line-height:15.32px;color:#474747;transform:scaleX(1.0445);">A</div><div class="a" style="left:457px;top:1053px;width:1px;height:15px;background:#d8d6d3"></div><div class="a" style="left:467px;top:1049px;width:26px;height:26px;background:linear-gradient(#f0efee,#dcdad7);border:1px solid #b9b6b1;border-radius:4px"></div><svg class="a" style="left:472px;top:1055px;" width="18" height="16" viewBox="0 0 18 16"><path d="M1.5 14L11.5 3.5H16" stroke="#000" stroke-width="1.1" fill="none"/><path d="M8.4 2v12" stroke="#1a30ff" stroke-width="1"/><path d="M6.4 3.5h4L8.4 6.5zM6.4 12.5h4L8.4 9.5z" fill="#1a30ff"/></svg><div class="a" style="left:497px;top:1049px;width:26px;height:26px;background:linear-gradient(#f0efee,#dcdad7);border:1px solid #b9b6b1;border-radius:4px"></div><svg class="a" style="left:502px;top:1055px;" width="18" height="16" viewBox="0 0 18 16"><path d="M1.5 2.8H5L15.5 13.5" stroke="#000" stroke-width="1.1" fill="none"/><path d="M8.2 2v12" stroke="#1a30ff" stroke-width="1"/><path d="M6.2 3.5h4L8.2 6.5zM6.2 12.5h4L8.2 9.5z" fill="#1a30ff"/></svg><div class="a" style="left:531px;top:1053px;width:1px;height:15px;background:#d8d6d3"></div><svg class="a" style="left:548.5px;top:1057px;" width="6" height="9" viewBox="0 0 6 9"><path d="M6 0V9L0 4.5z" fill="#1173c9"/></svg><div class="a" style="left:567px;top:1050px;width:58px;height:24px;background:#fff;border:1px solid #b5b3ae;border-radius:3px"></div><div class="t" style="left:572.00px;top:1055.53px;font-size:13.44px;line-height:15.02px;color:#303030;transform:scaleX(0.9770);">1 V</div><svg class="a" style="left:636.5px;top:1057px;" width="6" height="9" viewBox="0 0 6 9"><path d="M0 0V9L6 4.5z" fill="#1173c9"/></svg><svg class="a" style="left:662px;top:1057px;" width="6" height="9" viewBox="0 0 6 9"><path d="M6 0V9L0 4.5z" fill="#1173c9"/></svg><div class="a" style="left:681px;top:1050px;width:58px;height:24px;background:#fff;border:1px solid #b5b3ae;border-radius:3px"></div><div class="t" style="left:685.80px;top:1055.53px;font-size:13.44px;line-height:15.02px;color:#303030;transform:scaleX(0.9723);">50 %</div><svg class="a" style="left:750px;top:1057px;" width="6" height="9" viewBox="0 0 6 9"><path d="M0 0V9L6 4.5z" fill="#1173c9"/></svg><div class="a" style="left:769px;top:1049px;width:26px;height:26px;background:linear-gradient(#ffffff,#f4f3f2);border:1px solid #b9b6b1;border-radius:4px"></div><svg class="a" style="left:773px;top:1052px;" width="18" height="18" viewBox="0 0 18 18"><path d="M2 3h12" stroke="#2030ff" stroke-width="1.6"/><path d="M11 0.5l4 2.5-4 2.5z" fill="#2030ff"/><path d="M1 11c2-5 5-5 7 0s5 5 7 0" stroke="#000" stroke-width="1.2" fill="none" transform="translate(0,1)"/><path d="M14 6l3 3-3 3-3-3z" fill="#ffee00" stroke="#777" stroke-width="0.6"/></svg><svg class="a" style="left:807px;top:1057px;" width="6" height="9" viewBox="0 0 6 9"><path d="M6 0V9L0 4.5z" fill="#bcc0c0"/></svg><div class="a" style="left:825px;top:1050px;width:58px;height:24px;background:#e8e7e5;border:1px solid #cfcdca;border-radius:3px"></div><div class="t" style="left:829.50px;top:1055.53px;font-size:13.44px;line-height:15.02px;color:#b4b4b4;transform:scaleX(0.9194);">0 s</div><svg class="a" style="left:894.5px;top:1057px;" width="6" height="9" viewBox="0 0 6 9"><path d="M0 0V9L6 4.5z" fill="#bcc0c0"/></svg><div class="a" style="left:917px;top:1053px;width:1px;height:15px;background:#d8d6d3"></div><div class="t" style="left:924.50px;top:1054.19px;font-size:13.72px;line-height:15.32px;color:#474747;transform:scaleX(1.0855);">Measurements</div><div class="a" style="left:1027px;top:1049px;width:26px;height:26px;background:linear-gradient(#ffffff,#f4f3f2);border:1px solid #b9b6b1;border-radius:4px"></div><svg class="a" style="left:1033px;top:1054px;" width="15" height="15" viewBox="0 0 15 15"><rect x="0.5" y="0.5" width="14" height="14" fill="#1f9a2a" stroke="#0d4d14"/><path d="M7.5 3v9M3 7.5h9" stroke="#fff" stroke-width="2.4"/></svg><div class="a" style="left:1057px;top:1049px;width:26px;height:26px;background:linear-gradient(#ffffff,#f4f3f2);border:1px solid #b9b6b1;border-radius:4px"></div><svg class="a" style="left:1063px;top:1054px;" width="15" height="15" viewBox="0 0 15 15"><rect x="0.5" y="0.5" width="14" height="14" fill="#c6c6c6" stroke="#aaa"/><path d="M3 7.5h9" stroke="#eee" stroke-width="2.4"/></svg><div class="a" style="left:1091px;top:1053px;width:1px;height:15px;background:#d8d6d3"></div><div class="t" style="left:1098.50px;top:1054.19px;font-size:13.72px;line-height:15.32px;color:#474747;transform:scaleX(1.0267);">Rulers</div><div class="a" style="left:1141px;top:1049px;width:26px;height:26px;background:linear-gradient(#ffffff,#f4f3f2);border:1px solid #b9b6b1;border-radius:4px"></div><svg class="a" style="left:1147px;top:1054px;" width="15" height="15" viewBox="0 0 15 15"><rect x="0.5" y="0.5" width="14" height="14" fill="#1f9a2a" stroke="#0d4d14"/><path d="M2.5 11h10L7.5 4z" fill="#fff"/></svg><div class="t" style="left:1168.40px;top:1054.19px;font-size:13.72px;line-height:15.32px;color:#474747;transform:scaleX(1.1061);">Notes</div><div class="a" style="left:1210px;top:1049px;width:26px;height:26px;background:linear-gradient(#ffffff,#f4f3f2);border:1px solid #b9b6b1;border-radius:4px"></div><svg class="a" style="left:1216px;top:1054px;" width="15" height="15" viewBox="0 0 15 15"><rect x="0.5" y="0.5" width="14" height="14" fill="#1f9a2a" stroke="#0d4d14"/><path d="M2.5 11h10L7.5 4z" fill="#fff"/></svg>
<div class="a" style="left:1651px;top:807px;width:208px;height:158px;background:#fff;border-radius:6px 6px 0 0;box-shadow:0 4px 18px rgba(0,0,0,0.3)"></div><div class="a" style="left:1651px;top:807px;width:208px;height:28px;background:#3c3b37;border-radius:6px 6px 0 0"></div><div class="t" style="left:1733.60px;top:815.08px;font-size:12.07px;line-height:13.48px;color:#9b978f;font-weight:bold;transform:scaleX(0.9224);">Scope 1</div><svg class="a" style="left:1838px;top:813px;" width="16" height="16" viewBox="0 0 16 16"><circle cx="8" cy="8" r="8" fill="#57554f"/><path d="M5 5l6 6M11 5l-6 6" stroke="#8a877f" stroke-width="1.2"/></svg><svg class="a" style="left:0;top:0" width="1921" height="1077"><path d="M1661.5 845V960M1680.5 845V960M1699.5 845V960M1718.5 845V960M1736.5 845V960M1755.5 845V960M1774.5 845V960M1793.5 845V960M1812.5 845V960M1831.5 845V960M1850.5 845V960M1661 845.5H1850M1661 856.5H1850M1661 867.5H1850M1661 879.5H1850M1661 890.5H1850M1661 902.5H1850M1661 913.5H1850M1661 925.5H1850M1661 936.5H1850M1661 948.5H1850M1661 959.5H1850" stroke="#a6d5e6" stroke-width="1" stroke-dasharray="3 3" fill="none" shape-rendering="crispEdges"/><rect x="1661" y="871" width="187" height="46" fill="#f5222d"/><path d="M1661.0 871l2.3 -2.5l2.3 2.5M1665.7 871l2.3 -2.5l2.3 2.5M1670.3 871l2.3 -2.5l2.3 2.5M1675.0 871l2.3 -2.5l2.3 2.5M1679.7 871l2.3 -2.5l2.3 2.5M1684.4 871l2.3 -2.5l2.3 2.5M1689.0 871l2.3 -2.5l2.3 2.5M1693.7 871l2.3 -2.5l2.3 2.5M1698.4 871l2.3 -2.5l2.3 2.5M1703.1 871l2.3 -2.5l2.3 2.5M1707.8 871l2.3 -2.5l2.3 2.5M1712.4 871l2.3 -2.5l2.3 2.5M1717.1 871l2.3 -2.5l2.3 2.5M1721.8 871l2.3 -2.5l2.3 2.5M1726.5 871l2.3 -2.5l2.3 2.5M1731.1 871l2.3 -2.5l2.3 2.5M1735.8 871l2.3 -2.5l2.3 2.5M1740.5 871l2.3 -2.5l2.3 2.5M1745.2 871l2.3 -2.5l2.3 2.5M1749.8 871l2.3 -2.5l2.3 2.5M1754.5 871l2.3 -2.5l2.3 2.5M1759.2 871l2.3 -2.5l2.3 2.5M1763.8 871l2.3 -2.5l2.3 2.5M1768.5 871l2.3 -2.5l2.3 2.5M1773.2 871l2.3 -2.5l2.3 2.5M1777.9 871l2.3 -2.5l2.3 2.5M1782.5 871l2.3 -2.5l2.3 2.5M1787.2 871l2.3 -2.5l2.3 2.5M1791.9 871l2.3 -2.5l2.3 2.5M1796.6 871l2.3 -2.5l2.3 2.5M1801.2 871l2.3 -2.5l2.3 2.5M1805.9 871l2.3 -2.5l2.3 2.5M1810.6 871l2.3 -2.5l2.3 2.5M1815.3 871l2.3 -2.5l2.3 2.5M1820.0 871l2.3 -2.5l2.3 2.5M1824.6 871l2.3 -2.5l2.3 2.5M1829.3 871l2.3 -2.5l2.3 2.5M1834.0 871l2.3 -2.5l2.3 2.5M1838.7 871l2.3 -2.5l2.3 2.5M1843.3 871l2.3 -2.5l2.3 2.5M1661.0 917l2.3 2.5l2.3 -2.5M1665.7 917l2.3 2.5l2.3 -2.5M1670.3 917l2.3 2.5l2.3 -2.5M1675.0 917l2.3 2.5l2.3 -2.5M1679.7 917l2.3 2.5l2.3 -2.5M1684.4 917l2.3 2.5l2.3 -2.5M1689.0 917l2.3 2.5l2.3 -2.5M1693.7 917l2.3 2.5l2.3 -2.5M1698.4 917l2.3 2.5l2.3 -2.5M1703.1 917l2.3 2.5l2.3 -2.5M1707.8 917l2.3 2.5l2.3 -2.5M1712.4 917l2.3 2.5l2.3 -2.5M1717.1 917l2.3 2.5l2.3 -2.5M1721.8 917l2.3 2.5l2.3 -2.5M1726.5 917l2.3 2.5l2.3 -2.5M1731.1 917l2.3 2.5l2.3 -2.5M1735.8 917l2.3 2.5l2.3 -2.5M1740.5 917l2.3 2.5l2.3 -2.5M1745.2 917l2.3 2.5l2.3 -2.5M1749.8 917l2.3 2.5l2.3 -2.5M1754.5 917l2.3 2.5l2.3 -2.5M1759.2 917l2.3 2.5l2.3 -2.5M1763.8 917l2.3 2.5l2.3 -2.5M1768.5 917l2.3 2.5l2.3 -2.5M1773.2 917l2.3 2.5l2.3 -2.5M1777.9 917l2.3 2.5l2.3 -2.5M1782.5 917l2.3 2.5l2.3 -2.5M1787.2 917l2.3 2.5l2.3 -2.5M1791.9 917l2.3 2.5l2.3 -2.5M1796.6 917l2.3 2.5l2.3 -2.5M1801.2 917l2.3 2.5l2.3 -2.5M1805.9 917l2.3 2.5l2.3 -2.5M1810.6 917l2.3 2.5l2.3 -2.5M1815.3 917l2.3 2.5l2.3 -2.5M1820.0 917l2.3 2.5l2.3 -2.5M1824.6 917l2.3 2.5l2.3 -2.5M1829.3 917l2.3 2.5l2.3 -2.5M1834.0 917l2.3 2.5l2.3 -2.5M1838.7 917l2.3 2.5l2.3 -2.5M1843.3 917l2.3 2.5l2.3 -2.5" fill="#f5222d"/><path d="M1661.5 880V905M1662.5 882V905M1664.5 879V905M1665.5 879V905M1668.5 880V912M1669.5 882V912M1671.5 879V905M1672.5 879V905M1674.5 880V905M1675.5 880V905M1677.5 880V909M1678.5 882V909M1680.5 880V905M1681.5 881V905M1684.5 882V905M1685.5 882V905M1687.5 873V905M1691.5 879V912M1692.5 880V912M1694.5 882V907M1697.5 881V905M1698.5 882V905M1700.5 881V905M1703.5 881V905M1707.5 882V905M1708.5 883V905M1710.5 870V905M1711.5 871V905M1713.5 882V905M1716.5 875V905M1720.5 881V905M1724.5 880V908M1725.5 880V908M1727.5 880V905M1728.5 881V905M1730.5 881V905M1733.5 882V905M1734.5 883V905M1737.5 870V905M1738.5 870V905M1740.5 879V908M1741.5 880V908M1743.5 872V905M1744.5 873V905M1746.5 882V913M1750.5 881V907M1753.5 880V905M1754.5 882V905M1756.5 877V905M1759.5 879V905M1760.5 880V905M1762.5 880V905M1765.5 880V905M1768.5 876V905M1769.5 876V905M1771.5 880V905M1775.5 881V905M1776.5 881V905M1778.5 872V905M1779.5 874V905M1781.5 881V905M1782.5 883V905M1784.5 880V905M1785.5 882V905M1787.5 875V905M1790.5 880V905M1791.5 882V905M1794.5 880V905M1795.5 881V905M1797.5 877V906M1800.5 880V905M1803.5 872V905M1804.5 874V905M1806.5 882V905M1807.5 884V905M1809.5 882V905M1812.5 879V905M1815.5 880V913M1818.5 881V905M1819.5 882V905M1821.5 879V910M1822.5 879V910M1825.5 879V905M1828.5 882V905M1831.5 881V905M1834.5 880V905M1835.5 881V905M1837.5 882V910M1840.5 881V908M1843.5 879V905M1844.5 881V905M1846.5 875V905M1847.5 876V905" stroke="#0000ff" stroke-width="1" fill="none" shape-rendering="crispEdges"/><rect x="1661" y="900" width="187" height="5" fill="#0000f0"/><rect x="1717" y="866" width="1" height="56" fill="#fff" shape-rendering="crispEdges"/><rect x="1745" y="866" width="1" height="56" fill="#fff" shape-rendering="crispEdges"/><rect x="1773" y="866" width="1" height="56" fill="#fff" shape-rendering="crispEdges"/><rect x="1755" y="845" width="2" height="115" fill="#777"/><path d="M1749 900v5M1762 900v5M1749 902.5h13" stroke="#888" stroke-width="0.8"/><circle cx="1754" cy="890" r="1.5" fill="#ff0"/></svg>
</body></html>
